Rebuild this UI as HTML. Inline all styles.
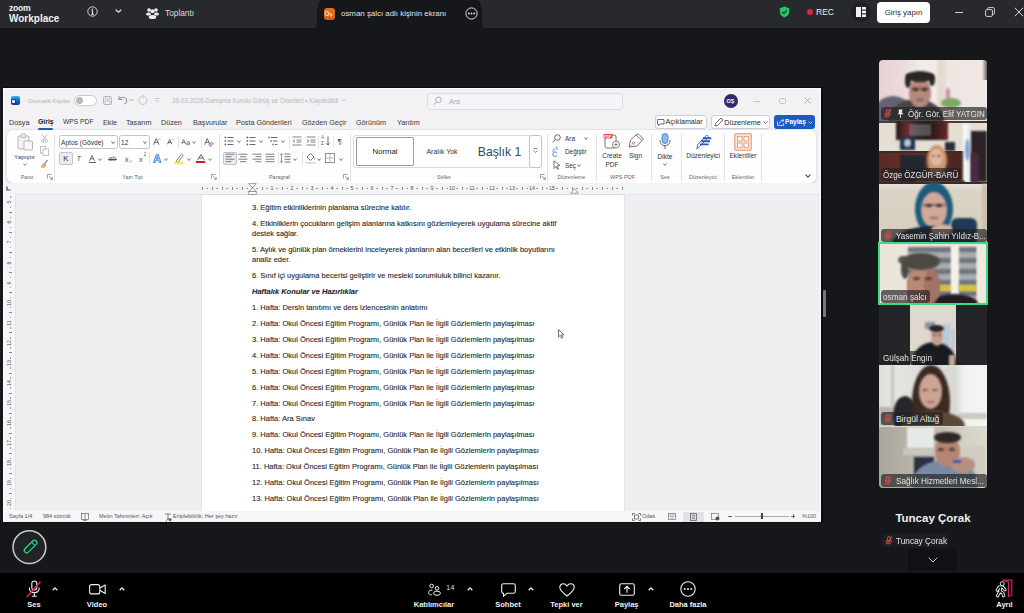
<!DOCTYPE html>
<html><head><meta charset="utf-8">
<style>
*{box-sizing:border-box;margin:0;padding:0}
html,body{width:1024px;height:613px;overflow:hidden}
body{position:relative;background:#15171a;font-family:"Liberation Sans",sans-serif;color:#fff}
.a{position:absolute}
.t{position:absolute;white-space:nowrap;line-height:1}
svg{position:absolute;overflow:visible}
/* word */
#w{left:2.5px;top:87.5px;width:818px;height:434px;background:#f2f1f4;border:1px solid #fbfbfc;box-shadow:1px 0 0 1px #0a0b0d;overflow:hidden;color:#242424}
.mnu{top:118.5px;font-size:7.2px;color:#3a3a3a}
.rl{position:absolute;top:85px;font-size:5.5px;color:#555;white-space:nowrap;line-height:1}
.sep{position:absolute;width:1px;background:#e3e2e6}
.dl{position:absolute;left:0;font-size:7.3px;color:#2a2a2a;white-space:nowrap;line-height:1}
.th{position:absolute;left:879px;width:108px;height:61px;overflow:hidden}
.lb{position:absolute;left:2px;height:13px;background:rgba(30,30,30,.72);border-radius:3px;font-size:8.5px;color:#e8e8e8;white-space:nowrap;line-height:13px;padding:0 2px}
.tb{position:absolute;top:598px;font-size:8.5px;color:#fff;white-space:nowrap;line-height:1;font-weight:bold;transform:translateX(-50%)}
</style></head>
<body>
<!-- top bar -->
<div class="a" style="left:314px;top:0;width:170px;height:8px;background:#28292c"></div>
<div class="a" style="left:0;top:0;width:317px;height:28px;background:#28292c;border-radius:0 0 4px 0"></div>
<div class="a" style="left:318px;top:0;width:163px;height:28px;background:#15171a;border-radius:5px 5px 0 0"></div>
<div class="a" style="left:482px;top:0;width:542px;height:28px;background:#28292c;border-radius:0 0 0 4px"></div>

<!-- word window -->
<div id="w" class="a"></div>

<!-- ===== WORD TITLE BAR ===== -->
<div class="a" style="left:11px;top:96px;width:8.5px;height:8.5px;background:linear-gradient(180deg,#35b8f0 0%,#1a6ad0 50%,#1a2f9a 100%);border-radius:2px"></div>
<div class="a" style="left:11.2px;top:99.3px;width:4.6px;height:4.4px;background:#1a3aa0;border-radius:1.5px"></div>
<div class="a" style="left:12.3px;top:100.3px;width:2.6px;height:2.4px;background:#fff;border-radius:50%"></div>
<div class="t" style="left:28px;top:98.5px;font-size:5.7px;color:#b3b2b6">Otomatik Kaydet</div>
<div class="a" style="left:74px;top:95px;width:23px;height:11px;border:1px solid #c9c8cc;border-radius:6px;background:#fff"></div>
<div class="a" style="left:76px;top:97px;width:7px;height:7px;border-radius:50%;background:#b9b8bc"></div>
<svg style="left:103px;top:96px" width="9" height="9" viewBox="0 0 9 9"><rect x="0.5" y="0.5" width="8" height="8" rx="1" fill="none" stroke="#b8b7bb"/><rect x="2.5" y="0.5" width="4" height="2.5" fill="none" stroke="#b8b7bb" stroke-width=".8"/><rect x="2" y="5" width="5" height="3.5" fill="none" stroke="#b8b7bb" stroke-width=".8"/></svg>
<svg style="left:117px;top:95px" width="12" height="10" viewBox="0 0 12 10"><path d="M2 1 L2 4.5 L5.5 4.5" fill="none" stroke="#9b9a9e" stroke-width="1.1"/><path d="M2.3 4.3 C4 1.5 8.5 1.5 9.5 4.5 C10 6.5 9 8.5 7 9" fill="none" stroke="#9b9a9e" stroke-width="1.1"/></svg>
<svg style="left:129px;top:98px" width="5" height="4" viewBox="0 0 5 4"><path d="M0.5 1 L2.5 3 L4.5 1" fill="none" stroke="#9b9a9e" stroke-width=".8"/></svg>
<svg style="left:137px;top:95px" width="11" height="11" viewBox="0 0 11 11"><path d="M8.5 2.5 A4 4 0 1 1 5.5 1.5" fill="none" stroke="#c2c1c5" stroke-width="1"/><path d="M5 0 L7.5 1.6 L5 3.2" fill="none" stroke="#c2c1c5" stroke-width=".9"/></svg>
<svg style="left:154px;top:98px" width="6" height="5" viewBox="0 0 6 5"><path d="M0.5 0.5 H5.5 M1 2 L3 4 L5 2" fill="none" stroke="#b8b7bb" stroke-width=".8"/></svg>
<div class="t" style="left:172px;top:98.3px;font-size:6.3px;color:#b8b7bb">26.03.2026-Danışma Kurulu Görüş ve Önerileri • Kaydedildi</div>
<svg style="left:341px;top:98px" width="6" height="4" viewBox="0 0 6 4"><path d="M0.5 0.8 L3 3.2 L5.5 0.8" fill="none" stroke="#b8b7bb" stroke-width=".8"/></svg>
<div class="a" style="left:427px;top:93px;width:196px;height:17px;border:1px solid #dedde2;border-radius:3px;background:#f5f4f7"></div>
<svg style="left:433px;top:96px" width="9" height="10" viewBox="0 0 9 10"><circle cx="5.5" cy="3.8" r="2.8" fill="none" stroke="#a5a4a8" stroke-width=".9"/><path d="M3.6 5.8 L1 8.8" stroke="#a5a4a8" stroke-width="1"/></svg>
<div class="t" style="left:449px;top:98px;font-size:7px;color:#a9a8ac">Ara</div>
<div class="a" style="left:724px;top:94px;width:14px;height:14px;border-radius:50%;background:#2f2a6b"></div>
<div class="t" style="left:726.5px;top:98.5px;font-size:5.5px;color:#fff;font-weight:bold">OŞ</div>
<div class="a" style="left:752.5px;top:100.5px;width:7px;height:.8px;background:#c4c3c7"></div>
<div class="a" style="left:779px;top:97.5px;width:6.5px;height:6.5px;border:.8px solid #c4c3c7;border-radius:1.5px"></div>
<svg style="left:804px;top:97px" width="7" height="7" viewBox="0 0 7 7"><path d="M0.5 0.5 L6.5 6.5 M6.5 0.5 L0.5 6.5" stroke="#a9a8ac" stroke-width=".9"/></svg>

<!-- ===== MENU ===== -->
<div class="t mnu" style="left:9px">Dosya</div>
<div class="t mnu" style="left:38px;color:#1f1f1f;font-weight:bold;font-size:6.9px;top:118.8px">Giriş</div>
<div class="a" style="left:38px;top:128px;width:15px;height:2px;background:#2f5aa8;border-radius:1px"></div>
<div class="t mnu" style="left:63px;font-size:6.7px;top:119.3px">WPS PDF</div>
<div class="t mnu" style="left:103px">Ekle</div>
<div class="t mnu" style="left:126px">Tasarım</div>
<div class="t mnu" style="left:161px">Düzen</div>
<div class="t mnu" style="left:193px">Başvurular</div>
<div class="t mnu" style="left:236px">Posta Gönderileri</div>
<div class="t mnu" style="left:302px">Gözden Geçir</div>
<div class="t mnu" style="left:356px">Görünüm</div>
<div class="t mnu" style="left:397px">Yardım</div>

<div class="a" style="left:655px;top:115px;width:52px;height:14px;border:1px solid #d0cfd4;border-radius:3px;background:#fff"></div>
<svg style="left:657px;top:118.5px" width="7.5" height="7.5" viewBox="0 0 7.5 7.5"><path d="M0.5 0.5 H7 V5 H2.8 L1.3 6.8 V5 H0.5 Z" fill="none" stroke="#444" stroke-width=".75" stroke-linejoin="round"/></svg>
<div class="t" style="left:665.6px;top:119px;font-size:7.1px;color:#2a2a2a">Açıklamalar</div>
<div class="a" style="left:711px;top:115px;width:59px;height:14px;border:1px solid #d0cfd4;border-radius:3px;background:#fff"></div>
<svg style="left:714px;top:117px" width="10" height="10" viewBox="0 0 10 10"><path d="M1 9 L1.5 6.5 L7 1 L9 3 L3.5 8.5 Z" fill="none" stroke="#444" stroke-width=".8"/></svg>
<div class="t" style="left:724.3px;top:119px;font-size:7.2px;color:#2a2a2a">Düzenleme</div>
<svg style="left:763px;top:121px" width="5" height="3" viewBox="0 0 5 3"><path d="M0.5 0.5 L2.5 2.5 L4.5 0.5" fill="none" stroke="#444" stroke-width=".7"/></svg>
<div class="a" style="left:774px;top:115px;width:41px;height:14px;border-radius:3px;background:#1b5ac0"></div>
<svg style="left:776.5px;top:118px" width="8" height="8" viewBox="0 0 8 8"><path d="M0.6 3.5 V7.4 H6.6 V5.2" fill="none" stroke="#fff" stroke-width=".75"/><path d="M2.4 5.4 C2.8 3.3 4 2.4 6.6 2.4 M5.3 1 L6.9 2.4 L5.3 3.8" fill="none" stroke="#fff" stroke-width=".75"/></svg>
<div class="t" style="left:785px;top:119px;font-size:6.6px;color:#fff;font-weight:bold">Paylaş</div>
<svg style="left:808px;top:121px" width="5" height="3" viewBox="0 0 5 3"><path d="M0.5 0.5 L2.5 2.5 L4.5 0.5" fill="none" stroke="#fff" stroke-width=".7"/></svg>


<!-- ===== RIBBON ===== -->
<div class="a" style="left:7px;top:130px;width:809px;height:52.5px;background:#fefefe;border-radius:6px;box-shadow:0 0.8px 2px rgba(0,0,0,.2)"></div>
<svg style="left:17px;top:133px" width="17" height="18" viewBox="0 0 17 18"><rect x="1" y="3" width="11" height="13" rx="1" fill="#f2f2f2" stroke="#b5b5b5" stroke-width="1"/><rect x="4" y="1" width="5" height="3.5" rx="1" fill="#e8e8e8" stroke="#b5b5b5" stroke-width=".9"/><rect x="7" y="8" width="8.5" height="9" rx="1" fill="#f7f7f7" stroke="#b5b5b5" stroke-width="1"/></svg>
<div class="t" style="left:24.5px;top:154.21px;font-size:6.20px;color:#444;transform:translateX(-50%);">Yapıştır</div>
<svg style="left:22.5px;top:162.5px" width="4" height="3" viewBox="0 0 4 3"><path d="M0.5 0.5 L2.0 2.5 L3.5 0.5" fill="none" stroke="#666" stroke-width="0.8"/></svg>
<svg style="left:41px;top:134px" width="7" height="9" viewBox="0 0 7 9"><path d="M1 0.5 L5 6 M6 0.5 L2 6" stroke="#b0b0b0" stroke-width=".9"/><circle cx="1.8" cy="7.2" r="1.3" fill="none" stroke="#b0b0b0" stroke-width=".8"/><circle cx="5.2" cy="7.2" r="1.3" fill="none" stroke="#b0b0b0" stroke-width=".8"/></svg>
<svg style="left:40px;top:146px" width="9" height="10" viewBox="0 0 9 10"><rect x="0.5" y="0.5" width="5" height="6.5" fill="none" stroke="#b0b0b0" stroke-width=".8"/><rect x="3" y="3" width="5.5" height="6.5" fill="#fff" stroke="#b0b0b0" stroke-width=".8"/></svg>
<svg style="left:40px;top:159px" width="9" height="9" viewBox="0 0 9 9"><path d="M1 8 L3.5 4.5 L6 6 L4 8.5 Z" fill="#f0b46a" stroke="#d98a3a" stroke-width=".6"/><path d="M4.5 5 L7.5 1" stroke="#777" stroke-width="1.2"/></svg>
<div class="t" style="left:27.0px;top:174.62px;font-size:5.30px;color:#666;transform:translateX(-50%);">Pano</div>
<svg style="left:47.0px;top:174.0px" width="6" height="6" viewBox="0 0 6 6"><path d="M0.5 4.5 V0.5 H4.5" fill="none" stroke="#777" stroke-width=".7"/><path d="M2 2 L5.3 5.3 M5.3 3 V5.3 H3" fill="none" stroke="#777" stroke-width=".7"/></svg>
<div class="a" style="left:54px;top:134px;width:1px;height:47px;background:#e4e3e7"></div>
<div class="a" style="left:59px;top:135px;width:59px;height:14px;border:1px solid #c4c3c8;border-radius:2.5px;background:#fff"></div>
<div class="t" style="left:61.0px;top:140.03px;font-size:6.60px;color:#333;">Aptos (Gövde)</div>
<svg style="left:111.0px;top:140.5px" width="4" height="3" viewBox="0 0 4 3"><path d="M0.5 0.5 L2.0 2.5 L3.5 0.5" fill="none" stroke="#444" stroke-width="0.8"/></svg>
<div class="a" style="left:119px;top:135px;width:31px;height:14px;border:1px solid #c4c3c8;border-radius:2.5px;background:#fff"></div>
<div class="t" style="left:121.0px;top:140.03px;font-size:6.60px;color:#333;">12</div>
<svg style="left:143.0px;top:140.5px" width="4" height="3" viewBox="0 0 4 3"><path d="M0.5 0.5 L2.0 2.5 L3.5 0.5" fill="none" stroke="#444" stroke-width="0.8"/></svg>
<svg style="left:152.7px;top:137.8px" width="6.5" height="7.0" viewBox="0 0 6.5 7.0"><path d="M0.5 6.7 L3.25 0.5 L6.0 6.7 M1.43 4.34 H5.07" fill="none" stroke="#505050" stroke-width="0.85"/></svg>
<svg style="left:158.3px;top:137.5px" width="3" height="3" viewBox="0 0 3 3"><path d="M0.3 2.2 L1.5 0.8 L2.7 2.2" fill="none" stroke="#6a8ab0" stroke-width=".6"/></svg>
<svg style="left:166.9px;top:139.2px" width="5.3" height="5.6" viewBox="0 0 5.3 5.6"><path d="M0.5 5.3 L2.65 0.5 L4.8 5.3 M1.17 3.47 H4.13" fill="none" stroke="#505050" stroke-width="0.85"/></svg>
<svg style="left:171.5px;top:137.5px" width="3" height="3" viewBox="0 0 3 3"><path d="M0.3 0.8 L1.5 2.2 L2.7 0.8" fill="none" stroke="#6a8ab0" stroke-width=".6"/></svg>
<div class="a" style="left:178px;top:136px;width:1px;height:12px;background:#e4e3e7"></div>
<svg style="left:181.0px;top:139.2px" width="5.2" height="5.5" viewBox="0 0 5.2 5.5"><path d="M0.5 5.2 L2.60 0.5 L4.7 5.2 M1.14 3.41 H4.06" fill="none" stroke="#606060" stroke-width="0.8"/></svg>
<svg style="left:185.8px;top:140.8px" width="4.5" height="4.2" viewBox="0 0 4.5 4.2"><path d="M0.5 0.8 C1.5 0.2 3.6 0.3 3.6 1.6 V4 M3.6 2.2 C1.5 1.8 0.4 2.3 0.4 3 C0.4 3.9 2.5 4.1 3.6 3" fill="none" stroke="#606060" stroke-width=".75"/></svg>
<svg style="left:192.3px;top:140.5px" width="4" height="3" viewBox="0 0 4 3"><path d="M0.5 0.5 L2.0 2.5 L3.5 0.5" fill="none" stroke="#555" stroke-width="0.8"/></svg>
<div class="a" style="left:201px;top:136px;width:1px;height:12px;background:#e4e3e7"></div>
<svg style="left:204.0px;top:137.8px" width="6.5" height="7.0" viewBox="0 0 6.5 7.0"><path d="M0.5 6.7 L3.25 0.5 L6.0 6.7 M1.43 4.34 H5.07" fill="none" stroke="#505050" stroke-width="0.85"/></svg>
<svg style="left:207.5px;top:140.5px" width="6" height="6" viewBox="0 0 6 6"><path d="M0.8 4.2 L3.6 1 L5.4 2.5 L2.6 5.5 Z" fill="#e6b8f0" stroke="#b050c0" stroke-width=".7"/></svg>
<div class="a" style="left:59px;top:152px;width:14px;height:13px;border:1px solid #c4c3c8;border-radius:2px;background:#ecebef"></div>
<div class="t" style="left:63.2px;top:155.29px;font-size:7.80px;color:#333;">K</div>
<div class="t" style="left:76.5px;top:155.43px;font-size:7.50px;color:#555;font-style:italic">T</div>
<svg style="left:89.3px;top:154.8px" width="6.0" height="6.2" viewBox="0 0 6.0 6.2"><path d="M0.5 5.9 L3.00 0.5 L5.5 5.9 M1.32 3.84 H4.68" fill="none" stroke="#505050" stroke-width="0.8"/></svg>
<div class="a" style="left:89px;top:162.3px;width:6.6px;height:0.9px;background:#606060"></div>
<svg style="left:97.5px;top:157.5px" width="4" height="3" viewBox="0 0 4 3"><path d="M0.5 0.5 L2.0 2.5 L3.5 0.5" fill="none" stroke="#555" stroke-width="0.8"/></svg>
<div class="t" style="left:108.5px;top:155.94px;font-size:6.80px;color:#666;">ab</div>
<div class="a" style="left:107.5px;top:158.5px;width:9px;height:0.8px;background:#555"></div>
<div class="t" style="left:125.0px;top:155.85px;font-size:7.00px;color:#444;">x</div>
<div class="t" style="left:129.5px;top:159.70px;font-size:4.00px;color:#3a7ad0;">2</div>
<div class="t" style="left:139.0px;top:155.85px;font-size:7.00px;color:#444;">x</div>
<div class="t" style="left:143.8px;top:153.47px;font-size:4.50px;color:#555;">2</div>
<div class="a" style="left:149px;top:152px;width:1px;height:13px;background:#e4e3e7"></div>
<svg style="left:152.5px;top:154px" width="8.5" height="9" viewBox="0 0 8.5 9"><path d="M0.5 8.5 L3.2 0.5 H5.3 L8 8.5 H6.3 L5.6 6.3 H2.9 L2.2 8.5 Z M3.4 4.8 H5.1 L4.25 2.3 Z" fill="#bcd8f6" stroke="#2e7bd6" stroke-width=".8" stroke-linejoin="round"/></svg>
<svg style="left:163.5px;top:157.5px" width="4" height="3" viewBox="0 0 4 3"><path d="M0.5 0.5 L2.0 2.5 L3.5 0.5" fill="none" stroke="#555" stroke-width="0.8"/></svg>
<svg style="left:173.5px;top:153.5px" width="10" height="11" viewBox="0 0 10 11"><path d="M2.5 6.5 L6.8 1 C7.3 0.4 8.1 0.4 8.6 0.9 C9.1 1.4 9.1 2.1 8.6 2.6 L4.5 7.5 L2.2 7.8 Z" fill="#fff" stroke="#555" stroke-width=".75"/><rect x="0.5" y="7.6" width="9" height="2.6" fill="#f2ea40"/></svg>
<svg style="left:186.6px;top:157.5px" width="4" height="3" viewBox="0 0 4 3"><path d="M0.5 0.5 L2.0 2.5 L3.5 0.5" fill="none" stroke="#555" stroke-width="0.8"/></svg>
<svg style="left:196.5px;top:154.4px" width="8.0" height="6.5" viewBox="0 0 8.0 6.5"><path d="M0.5 6.2 L4.00 0.5 L7.5 6.2 M1.76 4.03 H6.24" fill="none" stroke="#505050" stroke-width="0.85"/></svg>
<div class="a" style="left:196px;top:160.7px;width:9px;height:2.4px;background:#cc2020"></div>
<svg style="left:208.3px;top:157.5px" width="4" height="3" viewBox="0 0 4 3"><path d="M0.5 0.5 L2.0 2.5 L3.5 0.5" fill="none" stroke="#555" stroke-width="0.8"/></svg>
<div class="t" style="left:132.5px;top:174.53px;font-size:5.50px;color:#666;transform:translateX(-50%);">Yazı Tipi</div>
<svg style="left:211.0px;top:174.0px" width="6" height="6" viewBox="0 0 6 6"><path d="M0.5 4.5 V0.5 H4.5" fill="none" stroke="#777" stroke-width=".7"/><path d="M2 2 L5.3 5.3 M5.3 3 V5.3 H3" fill="none" stroke="#777" stroke-width=".7"/></svg>
<div class="a" style="left:219px;top:134px;width:1px;height:47px;background:#e4e3e7"></div>
<svg style="left:224px;top:136px" width="10" height="10" viewBox="0 0 10 10"><rect x="0.5" y="0.7" width="1.6" height="1.6" fill="#2e7bd6"/><path d="M3.5 1.5 H9.5" stroke="#555" stroke-width=".9"/><rect x="0.5" y="4.2" width="1.6" height="1.6" fill="#2e7bd6"/><path d="M3.5 5.0 H9.5" stroke="#555" stroke-width=".9"/><rect x="0.5" y="7.7" width="1.6" height="1.6" fill="#2e7bd6"/><path d="M3.5 8.5 H9.5" stroke="#555" stroke-width=".9"/></svg>
<svg style="left:237.0px;top:140.0px" width="4" height="3" viewBox="0 0 4 3"><path d="M0.5 0.5 L2.0 2.5 L3.5 0.5" fill="none" stroke="#555" stroke-width="0.8"/></svg>
<svg style="left:246px;top:136px" width="10" height="10" viewBox="0 0 10 10"><rect x="0.5" y="0.7" width="1.6" height="1.6" fill="#666"/><path d="M3.5 1.5 H9.5" stroke="#555" stroke-width=".9"/><rect x="0.5" y="4.2" width="1.6" height="1.6" fill="#666"/><path d="M3.5 5.0 H9.5" stroke="#555" stroke-width=".9"/><rect x="0.5" y="7.7" width="1.6" height="1.6" fill="#666"/><path d="M3.5 8.5 H9.5" stroke="#555" stroke-width=".9"/></svg>
<svg style="left:259.0px;top:140.0px" width="4" height="3" viewBox="0 0 4 3"><path d="M0.5 0.5 L2.0 2.5 L3.5 0.5" fill="none" stroke="#555" stroke-width="0.8"/></svg>
<svg style="left:268px;top:136px" width="10" height="10" viewBox="0 0 10 10"><rect x="0.3" y="0.8" width="1.5" height="1.5" fill="#2e7bd6"/><path d="M3 1.5 H9.5" stroke="#555" stroke-width=".9"/><rect x="2.3" y="4.3" width="1.5" height="1.5" fill="#2e7bd6"/><path d="M5 5 H9.5" stroke="#555" stroke-width=".9"/><rect x="4.3" y="7.8" width="1.5" height="1.5" fill="#2e7bd6"/><path d="M7 8.5 H9.5" stroke="#555" stroke-width=".9"/></svg>
<svg style="left:281.0px;top:140.0px" width="4" height="3" viewBox="0 0 4 3"><path d="M0.5 0.5 L2.0 2.5 L3.5 0.5" fill="none" stroke="#555" stroke-width="0.8"/></svg>
<div class="a" style="left:289px;top:136px;width:1px;height:12px;background:#e4e3e7"></div>
<svg style="left:292px;top:136px" width="10" height="10" viewBox="0 0 10 10"><path d="M0.5 1 H9.5 M4.5 4 H9.5 M4.5 6 H9.5 M0.5 9 H9.5" stroke="#666" stroke-width=".8"/><path d="M3 3.5 L1 5 L3 6.5" fill="none" stroke="#2e7bd6" stroke-width=".8"/></svg>
<svg style="left:306px;top:136px" width="10" height="10" viewBox="0 0 10 10"><path d="M0.5 1 H9.5 M4.5 4 H9.5 M4.5 6 H9.5 M0.5 9 H9.5" stroke="#666" stroke-width=".8"/><path d="M1 3.5 L3 5 L1 6.5" fill="none" stroke="#2e7bd6" stroke-width=".8"/></svg>
<div class="a" style="left:318px;top:136px;width:1px;height:12px;background:#e4e3e7"></div>
<div class="t" style="left:321.0px;top:136.47px;font-size:4.50px;color:#2e7bd6;">A</div>
<div class="t" style="left:321.0px;top:141.97px;font-size:4.50px;color:#444;">Z</div>
<svg style="left:326px;top:136px" width="4" height="10" viewBox="0 0 4 10"><path d="M2 0.5 V9 M0.5 7.3 L2 9 L3.5 7.3" fill="none" stroke="#444" stroke-width=".8"/></svg>
<div class="a" style="left:333px;top:136px;width:1px;height:12px;background:#e4e3e7"></div>
<div class="t" style="left:337.5px;top:138.40px;font-size:8.00px;color:#444;">¶</div>
<div class="a" style="left:223px;top:152px;width:14px;height:13px;border:1px solid #c4c3c8;border-radius:2px;background:#ecebef"></div>
<svg style="left:225px;top:153px" width="10" height="10" viewBox="0 0 10 10"><path d="M0.5 1.2 H9.5 M0.5 3.7 H6.5 M0.5 6.2 H9.5 M0.5 8.7 H6.5" stroke="#555" stroke-width=".75"/></svg>
<svg style="left:238px;top:153px" width="10" height="10" viewBox="0 0 10 10"><path d="M0.5 1.2 H9.5 M2.0 3.7 H8.0 M0.5 6.2 H9.5 M2.0 8.7 H8.0" stroke="#555" stroke-width=".75"/></svg>
<svg style="left:252px;top:153px" width="10" height="10" viewBox="0 0 10 10"><path d="M0.5 1.2 H9.5 M3.5 3.7 H9.5 M0.5 6.2 H9.5 M3.5 8.7 H9.5" stroke="#555" stroke-width=".75"/></svg>
<svg style="left:265px;top:153px" width="10" height="10" viewBox="0 0 10 10"><path d="M0.5 1.2 H9.5 M0.5 3.7 H9.5 M0.5 6.2 H9.5 M0.5 8.7 H9.5" stroke="#555" stroke-width=".75"/></svg>
<div class="a" style="left:278px;top:152px;width:1px;height:13px;background:#e4e3e7"></div>
<svg style="left:280px;top:153px" width="11" height="10" viewBox="0 0 11 10"><path d="M1.5 0.5 V9.5 M0.3 1.8 L1.5 0.5 L2.7 1.8 M0.3 8.2 L1.5 9.5 L2.7 8.2" fill="none" stroke="#2e7bd6" stroke-width=".7"/><path d="M4.5 1 H10.5 M4.5 3.7 H10.5 M4.5 6.3 H10.5 M4.5 9 H10.5" stroke="#555" stroke-width=".8"/></svg>
<svg style="left:292.5px;top:157.5px" width="4" height="3" viewBox="0 0 4 3"><path d="M0.5 0.5 L2.0 2.5 L3.5 0.5" fill="none" stroke="#555" stroke-width="0.8"/></svg>
<div class="a" style="left:302px;top:152px;width:1px;height:13px;background:#e4e3e7"></div>
<svg style="left:305px;top:152px" width="11" height="12" viewBox="0 0 11 12"><path d="M2 5 L5.5 1.5 L9 5 L5.5 8.5 Z" fill="none" stroke="#555" stroke-width=".8"/><path d="M9 5.5 C9.5 6.5 10 7 9.5 7.5" fill="none" stroke="#555" stroke-width=".7"/><rect x="0.5" y="10" width="10" height="1.8" fill="#dcdcdc"/></svg>
<svg style="left:317.0px;top:157.5px" width="4" height="3" viewBox="0 0 4 3"><path d="M0.5 0.5 L2.0 2.5 L3.5 0.5" fill="none" stroke="#555" stroke-width="0.8"/></svg>
<svg style="left:325px;top:153px" width="10" height="10" viewBox="0 0 10 10"><rect x="0.5" y="0.5" width="9" height="9" fill="none" stroke="#777" stroke-width=".8"/><path d="M5 0.5 V9.5 M0.5 5 H9.5" stroke="#999" stroke-width=".6"/></svg>
<svg style="left:338.5px;top:157.5px" width="4" height="3" viewBox="0 0 4 3"><path d="M0.5 0.5 L2.0 2.5 L3.5 0.5" fill="none" stroke="#555" stroke-width="0.8"/></svg>
<div class="t" style="left:279.5px;top:174.53px;font-size:5.50px;color:#666;transform:translateX(-50%);">Paragraf</div>
<svg style="left:343.0px;top:174.0px" width="6" height="6" viewBox="0 0 6 6"><path d="M0.5 4.5 V0.5 H4.5" fill="none" stroke="#777" stroke-width=".7"/><path d="M2 2 L5.3 5.3 M5.3 3 V5.3 H3" fill="none" stroke="#777" stroke-width=".7"/></svg>
<div class="a" style="left:350px;top:134px;width:1px;height:47px;background:#e4e3e7"></div>
<div class="a" style="left:353px;top:135px;width:189px;height:33px;border:1px solid #dcdbe0;border-radius:3px;background:#fff"></div>
<div class="a" style="left:356px;top:137px;width:58px;height:29px;border:1px solid #9e9ea2;border-radius:1px;background:#fff"></div>
<div class="t" style="left:385.0px;top:147.99px;font-size:7.80px;color:#222;transform:translateX(-50%);">Normal</div>
<div class="t" style="left:442.0px;top:148.35px;font-size:7.00px;color:#333;transform:translateX(-50%);">Aralık Yok</div>
<div class="t" style="left:499.5px;top:146.01px;font-size:12.20px;color:#2b4b5e;transform:translateX(-50%);">Başlık 1</div>
<div class="a" style="left:529px;top:135px;width:13px;height:33px;border:1px solid #c4c3c8;border-radius:3px;background:#fff"></div>
<svg style="left:533px;top:148px" width="5" height="6" viewBox="0 0 5 6"><path d="M0.5 0.5 H4.5 M0.5 2.5 L2.5 4.5 L4.5 2.5" fill="none" stroke="#555" stroke-width=".7"/></svg>
<div class="t" style="left:444.0px;top:174.53px;font-size:5.50px;color:#666;transform:translateX(-50%);">Stiller</div>
<svg style="left:540.0px;top:174.0px" width="6" height="6" viewBox="0 0 6 6"><path d="M0.5 4.5 V0.5 H4.5" fill="none" stroke="#777" stroke-width=".7"/><path d="M2 2 L5.3 5.3 M5.3 3 V5.3 H3" fill="none" stroke="#777" stroke-width=".7"/></svg>
<div class="a" style="left:547px;top:134px;width:1px;height:47px;background:#e4e3e7"></div>
<svg style="left:552px;top:134px" width="9" height="9" viewBox="0 0 9 9"><circle cx="5.5" cy="3.5" r="2.8" fill="none" stroke="#555" stroke-width=".9"/><path d="M3.5 5.5 L0.8 8.3" stroke="#555" stroke-width="1"/></svg>
<div class="t" style="left:565.0px;top:136.12px;font-size:6.40px;color:#333;">Ara</div>
<svg style="left:584.0px;top:137.0px" width="4" height="3" viewBox="0 0 4 3"><path d="M0.5 0.5 L2.0 2.5 L3.5 0.5" fill="none" stroke="#555" stroke-width="0.8"/></svg>
<svg style="left:552px;top:146px" width="10" height="10" viewBox="0 0 10 10"><text x="3.5" y="4" font-size="4.5" fill="#a050c0" font-family="Liberation Sans">b</text><path d="M5 7 A2.3 2.3 0 1 0 5 9.5" fill="none" stroke="#2e7bd6" stroke-width=".9"/><path d="M1 6 A3 3 0 0 1 3 2.5" fill="none" stroke="#2e7bd6" stroke-width=".7"/></svg>
<div class="t" style="left:565.0px;top:149.12px;font-size:6.40px;color:#333;">Değiştir</div>
<svg style="left:553px;top:160px" width="8" height="10" viewBox="0 0 8 10"><path d="M1 0.8 L7 5.5 L4 6 L5.5 9 L4.5 9.4 L3 6.5 L1 8.5 Z" fill="none" stroke="#555" stroke-width=".8"/></svg>
<div class="t" style="left:565.0px;top:162.62px;font-size:6.40px;color:#333;">Seç</div>
<svg style="left:577.0px;top:163.5px" width="4" height="3" viewBox="0 0 4 3"><path d="M0.5 0.5 L2.0 2.5 L3.5 0.5" fill="none" stroke="#555" stroke-width="0.8"/></svg>
<div class="t" style="left:571.5px;top:174.53px;font-size:5.50px;color:#666;transform:translateX(-50%);">Düzenleme</div>
<div class="a" style="left:596px;top:134px;width:1px;height:47px;background:#e4e3e7"></div>
<svg style="left:603px;top:133px" width="18" height="16" viewBox="0 0 18 16"><rect x="2" y="2" width="11" height="13" rx="2" fill="#fff" stroke="#666" stroke-width=".9"/><rect x="0.5" y="1" width="9" height="4.5" rx="1" fill="#e84545"/><text x="1.2" y="4.6" font-size="3.5" fill="#fff" font-family="Liberation Sans" font-weight="bold">PDF</text><circle cx="13" cy="11.5" r="3.5" fill="#fff" stroke="#666" stroke-width=".8"/><path d="M13 9.8 V13.2 M11.3 11.5 H14.7" stroke="#666" stroke-width=".8"/></svg>
<div class="t" style="left:612.0px;top:152.57px;font-size:6.50px;color:#333;transform:translateX(-50%);">Create</div>
<div class="t" style="left:612.0px;top:161.57px;font-size:6.50px;color:#333;transform:translateX(-50%);">PDF</div>
<svg style="left:627px;top:133px" width="17" height="16" viewBox="0 0 17 16"><path d="M2 14 L3.5 7 L9 2 L15 7.5 L10 13 Z" fill="#fff" stroke="#666" stroke-width=".9"/><path d="M9 2 L11 0.5 L16.5 6 L15 7.5" fill="none" stroke="#666" stroke-width=".9"/><circle cx="6.5" cy="10" r="1.2" fill="none" stroke="#e06060" stroke-width=".7"/><path d="M2 14 L6 10.5" stroke="#e06060" stroke-width=".6"/></svg>
<div class="t" style="left:635.5px;top:152.57px;font-size:6.50px;color:#333;transform:translateX(-50%);">Sign</div>
<div class="t" style="left:622.5px;top:174.53px;font-size:5.50px;color:#666;transform:translateX(-50%);">WPS PDF</div>
<div class="a" style="left:651px;top:134px;width:1px;height:47px;background:#e4e3e7"></div>
<svg style="left:659px;top:133px" width="12" height="17" viewBox="0 0 12 17"><rect x="3" y="0.5" width="6" height="10" rx="3" fill="#8cb8ec" stroke="#3a78c8" stroke-width=".8"/><path d="M1 7 C1 11 3 12.5 6 12.5 C9 12.5 11 11 11 7 M6 12.5 V16" fill="none" stroke="#555" stroke-width=".9"/></svg>
<div class="t" style="left:665.0px;top:154.03px;font-size:6.60px;color:#333;transform:translateX(-50%);">Dikte</div>
<svg style="left:663.0px;top:162.5px" width="4" height="3" viewBox="0 0 4 3"><path d="M0.5 0.5 L2.0 2.5 L3.5 0.5" fill="none" stroke="#555" stroke-width="0.8"/></svg>
<div class="t" style="left:665.0px;top:174.53px;font-size:5.50px;color:#666;transform:translateX(-50%);">Ses</div>
<div class="a" style="left:681px;top:134px;width:1px;height:47px;background:#e4e3e7"></div>
<svg style="left:694.5px;top:133px" width="18" height="18" viewBox="0 0 18 18"><path d="M1.8 15.8 L2.8 11.5 L11.8 2 L13.6 3.8 L4.8 13.4 Z" fill="#fff" stroke="#2a5cb8" stroke-width=".9" stroke-linejoin="round"/><path d="M7.8 5.2 H16.3 M6.3 8.3 H15 M4.9 11.4 H13.6" stroke="#2a5cb8" stroke-width="1.9"/></svg>
<div class="t" style="left:703.0px;top:152.53px;font-size:6.60px;color:#333;transform:translateX(-50%);">Düzenleyici</div>
<div class="t" style="left:703.0px;top:174.53px;font-size:5.50px;color:#666;transform:translateX(-50%);">Düzenleyici</div>
<div class="a" style="left:724px;top:134px;width:1px;height:47px;background:#e4e3e7"></div>
<svg style="left:734px;top:133px" width="18" height="18" viewBox="0 0 18 18"><rect x="0.8" y="0.8" width="16.4" height="16.4" rx=".4" fill="#fbe6dc" stroke="#e0906e" stroke-width="1"/><rect x="3.5" y="3.5" width="4.5" height="4.5" fill="#fff" stroke="#e0906e" stroke-width=".8"/><rect x="10" y="3.5" width="4.5" height="4.5" fill="#fff" stroke="#e0906e" stroke-width=".8"/><rect x="3.5" y="10" width="4.5" height="4.5" fill="#fff" stroke="#e0906e" stroke-width=".8"/><rect x="10" y="10" width="4.5" height="4.5" fill="#fff" stroke="#e0906e" stroke-width=".8"/></svg>
<div class="t" style="left:743.0px;top:152.53px;font-size:6.60px;color:#333;transform:translateX(-50%);">Eklentiler</div>
<div class="t" style="left:743.0px;top:174.53px;font-size:5.50px;color:#666;transform:translateX(-50%);">Eklentiler</div>
<div class="a" style="left:761px;top:134px;width:1px;height:47px;background:#e4e3e7"></div>
<svg style="left:805px;top:173.5px" width="6" height="4" viewBox="0 0 6 4"><path d="M0.6 0.6 L3 3.2 L5.4 0.6" fill="none" stroke="#444" stroke-width="1.1"/></svg>
<!-- ===== DOC AREA ===== -->
<div class="a" style="left:4px;top:183px;width:816px;height:12px;background:#f4f3f6"></div>
<div class="a" style="left:16px;top:194px;width:804px;height:1px;background:#e6e5e9"></div>
<div class="a" style="left:4px;top:195px;width:12px;height:316px;background:#f6f5f8;border-right:1px solid #e3e2e6"></div>
<div class="a" style="left:16px;top:195px;width:804px;height:316px;background:#f0eef1"></div>
<div class="a" style="left:202px;top:195px;width:422px;height:316px;background:#fff;box-shadow:0 0 1.5px rgba(0,0,0,.18)"></div>
<svg style="left:6px;top:186px" width="5" height="5" viewBox="0 0 5 5"><path d="M1 0.5 V4 H4.5" fill="none" stroke="#444" stroke-width="1.2"/></svg>
<div class="a" style="left:201.6px;top:187px;width:0.8px;height:3px;background:#888"></div>
<div class="a" style="left:206.2px;top:188px;width:1.5px;height:0.8px;background:#999"></div>
<div class="a" style="left:211.6px;top:187px;width:0.8px;height:3px;background:#888"></div>
<div class="a" style="left:216.2px;top:188px;width:1.5px;height:0.8px;background:#999"></div>
<div class="a" style="left:221.6px;top:187px;width:0.8px;height:3px;background:#888"></div>
<div class="a" style="left:226.2px;top:188px;width:1.5px;height:0.8px;background:#999"></div>
<div class="a" style="left:231.6px;top:187px;width:0.8px;height:3px;background:#888"></div>
<div class="a" style="left:236.2px;top:188px;width:1.5px;height:0.8px;background:#999"></div>
<div class="a" style="left:241.6px;top:187px;width:0.8px;height:3px;background:#888"></div>
<div class="a" style="left:246.2px;top:188px;width:1.5px;height:0.8px;background:#999"></div>
<div class="a" style="left:251.6px;top:187px;width:0.8px;height:3px;background:#888"></div>
<div class="a" style="left:256.2px;top:188px;width:1.5px;height:0.8px;background:#999"></div>
<div class="a" style="left:261.6px;top:187px;width:0.8px;height:3px;background:#888"></div>
<div class="a" style="left:266.2px;top:188px;width:1.5px;height:0.8px;background:#999"></div>
<div class="t" style="left:272.0px;top:186.12px;font-size:5.30px;color:#555;transform:translateX(-50%);">1</div>
<div class="a" style="left:276.2px;top:188px;width:1.5px;height:0.8px;background:#999"></div>
<div class="a" style="left:281.6px;top:187px;width:0.8px;height:3px;background:#888"></div>
<div class="a" style="left:286.2px;top:188px;width:1.5px;height:0.8px;background:#999"></div>
<div class="t" style="left:292.0px;top:186.12px;font-size:5.30px;color:#555;transform:translateX(-50%);">2</div>
<div class="a" style="left:296.2px;top:188px;width:1.5px;height:0.8px;background:#999"></div>
<div class="a" style="left:301.6px;top:187px;width:0.8px;height:3px;background:#888"></div>
<div class="a" style="left:306.2px;top:188px;width:1.5px;height:0.8px;background:#999"></div>
<div class="t" style="left:312.0px;top:186.12px;font-size:5.30px;color:#555;transform:translateX(-50%);">3</div>
<div class="a" style="left:316.2px;top:188px;width:1.5px;height:0.8px;background:#999"></div>
<div class="a" style="left:321.6px;top:187px;width:0.8px;height:3px;background:#888"></div>
<div class="a" style="left:326.2px;top:188px;width:1.5px;height:0.8px;background:#999"></div>
<div class="t" style="left:332.0px;top:186.12px;font-size:5.30px;color:#555;transform:translateX(-50%);">4</div>
<div class="a" style="left:336.2px;top:188px;width:1.5px;height:0.8px;background:#999"></div>
<div class="a" style="left:341.6px;top:187px;width:0.8px;height:3px;background:#888"></div>
<div class="a" style="left:346.2px;top:188px;width:1.5px;height:0.8px;background:#999"></div>
<div class="t" style="left:352.0px;top:186.12px;font-size:5.30px;color:#555;transform:translateX(-50%);">5</div>
<div class="a" style="left:356.2px;top:188px;width:1.5px;height:0.8px;background:#999"></div>
<div class="a" style="left:361.6px;top:187px;width:0.8px;height:3px;background:#888"></div>
<div class="a" style="left:366.2px;top:188px;width:1.5px;height:0.8px;background:#999"></div>
<div class="t" style="left:372.0px;top:186.12px;font-size:5.30px;color:#555;transform:translateX(-50%);">6</div>
<div class="a" style="left:376.2px;top:188px;width:1.5px;height:0.8px;background:#999"></div>
<div class="a" style="left:381.6px;top:187px;width:0.8px;height:3px;background:#888"></div>
<div class="a" style="left:386.2px;top:188px;width:1.5px;height:0.8px;background:#999"></div>
<div class="t" style="left:392.0px;top:186.12px;font-size:5.30px;color:#555;transform:translateX(-50%);">7</div>
<div class="a" style="left:396.2px;top:188px;width:1.5px;height:0.8px;background:#999"></div>
<div class="a" style="left:401.6px;top:187px;width:0.8px;height:3px;background:#888"></div>
<div class="a" style="left:406.2px;top:188px;width:1.5px;height:0.8px;background:#999"></div>
<div class="t" style="left:412.0px;top:186.12px;font-size:5.30px;color:#555;transform:translateX(-50%);">8</div>
<div class="a" style="left:416.2px;top:188px;width:1.5px;height:0.8px;background:#999"></div>
<div class="a" style="left:421.6px;top:187px;width:0.8px;height:3px;background:#888"></div>
<div class="a" style="left:426.2px;top:188px;width:1.5px;height:0.8px;background:#999"></div>
<div class="t" style="left:432.0px;top:186.12px;font-size:5.30px;color:#555;transform:translateX(-50%);">9</div>
<div class="a" style="left:436.2px;top:188px;width:1.5px;height:0.8px;background:#999"></div>
<div class="a" style="left:441.6px;top:187px;width:0.8px;height:3px;background:#888"></div>
<div class="a" style="left:446.2px;top:188px;width:1.5px;height:0.8px;background:#999"></div>
<div class="t" style="left:452.0px;top:186.12px;font-size:5.30px;color:#555;transform:translateX(-50%);">10</div>
<div class="a" style="left:456.2px;top:188px;width:1.5px;height:0.8px;background:#999"></div>
<div class="a" style="left:461.6px;top:187px;width:0.8px;height:3px;background:#888"></div>
<div class="a" style="left:466.2px;top:188px;width:1.5px;height:0.8px;background:#999"></div>
<div class="t" style="left:472.0px;top:186.12px;font-size:5.30px;color:#555;transform:translateX(-50%);">11</div>
<div class="a" style="left:476.2px;top:188px;width:1.5px;height:0.8px;background:#999"></div>
<div class="a" style="left:481.6px;top:187px;width:0.8px;height:3px;background:#888"></div>
<div class="a" style="left:486.2px;top:188px;width:1.5px;height:0.8px;background:#999"></div>
<div class="t" style="left:492.0px;top:186.12px;font-size:5.30px;color:#555;transform:translateX(-50%);">12</div>
<div class="a" style="left:496.2px;top:188px;width:1.5px;height:0.8px;background:#999"></div>
<div class="a" style="left:501.6px;top:187px;width:0.8px;height:3px;background:#888"></div>
<div class="a" style="left:506.2px;top:188px;width:1.5px;height:0.8px;background:#999"></div>
<div class="t" style="left:512.0px;top:186.12px;font-size:5.30px;color:#555;transform:translateX(-50%);">13</div>
<div class="a" style="left:516.2px;top:188px;width:1.5px;height:0.8px;background:#999"></div>
<div class="a" style="left:521.6px;top:187px;width:0.8px;height:3px;background:#888"></div>
<div class="a" style="left:526.2px;top:188px;width:1.5px;height:0.8px;background:#999"></div>
<div class="t" style="left:532.0px;top:186.12px;font-size:5.30px;color:#555;transform:translateX(-50%);">14</div>
<div class="a" style="left:536.2px;top:188px;width:1.5px;height:0.8px;background:#999"></div>
<div class="a" style="left:541.6px;top:187px;width:0.8px;height:3px;background:#888"></div>
<div class="a" style="left:546.2px;top:188px;width:1.5px;height:0.8px;background:#999"></div>
<div class="t" style="left:552.0px;top:186.12px;font-size:5.30px;color:#555;transform:translateX(-50%);">15</div>
<div class="a" style="left:556.2px;top:188px;width:1.5px;height:0.8px;background:#999"></div>
<div class="a" style="left:561.6px;top:187px;width:0.8px;height:3px;background:#888"></div>
<div class="a" style="left:566.2px;top:188px;width:1.5px;height:0.8px;background:#999"></div>
<div class="a" style="left:571.6px;top:187px;width:0.8px;height:3px;background:#888"></div>
<div class="a" style="left:576.2px;top:188px;width:1.5px;height:0.8px;background:#999"></div>
<div class="a" style="left:581.6px;top:187px;width:0.8px;height:3px;background:#888"></div>
<div class="a" style="left:586.2px;top:188px;width:1.5px;height:0.8px;background:#999"></div>
<div class="a" style="left:591.6px;top:187px;width:0.8px;height:3px;background:#888"></div>
<div class="a" style="left:596.2px;top:188px;width:1.5px;height:0.8px;background:#999"></div>
<div class="a" style="left:601.6px;top:187px;width:0.8px;height:3px;background:#888"></div>
<div class="a" style="left:606.2px;top:188px;width:1.5px;height:0.8px;background:#999"></div>
<div class="a" style="left:611.6px;top:187px;width:0.8px;height:3px;background:#888"></div>
<div class="a" style="left:616.2px;top:188px;width:1.5px;height:0.8px;background:#999"></div>
<div class="a" style="left:621.6px;top:187px;width:0.8px;height:3px;background:#888"></div>
<svg style="left:248px;top:183px" width="9" height="12" viewBox="0 0 9 12"><path d="M0.8 0.6 H8.2 L4.5 5 Z M4.5 5 L0.8 8.5 H8.2 Z" fill="#fff" stroke="#777" stroke-width=".7"/><rect x="0.8" y="8.5" width="7.4" height="3" fill="#fff" stroke="#777" stroke-width=".7"/></svg>
<svg style="left:570px;top:188px" width="9" height="6" viewBox="0 0 9 6"><path d="M4.5 0.6 L8.2 5.2 H0.8 Z" fill="#fff" stroke="#777" stroke-width=".7"/></svg>
<div class="a" style="left:9.5px;top:196.4px;width:0.8px;height:1.5px;background:#999"></div>
<div class="t" style="left:9.5px;top:202.2px;font-size:5.3px;color:#555;transform:translate(-50%,-50%) rotate(-90deg)">5</div>
<div class="a" style="left:9.5px;top:206.5px;width:0.8px;height:1.5px;background:#999"></div>
<div class="a" style="left:8.5px;top:211.9px;width:3px;height:0.8px;background:#888"></div>
<div class="a" style="left:9.5px;top:216.5px;width:0.8px;height:1.5px;background:#999"></div>
<div class="t" style="left:9.5px;top:222.3px;font-size:5.3px;color:#555;transform:translate(-50%,-50%) rotate(-90deg)">6</div>
<div class="a" style="left:9.5px;top:226.6px;width:0.8px;height:1.5px;background:#999"></div>
<div class="a" style="left:8.5px;top:231.9px;width:3px;height:0.8px;background:#888"></div>
<div class="a" style="left:9.5px;top:236.6px;width:0.8px;height:1.5px;background:#999"></div>
<div class="t" style="left:9.5px;top:242.4px;font-size:5.3px;color:#555;transform:translate(-50%,-50%) rotate(-90deg)">7</div>
<div class="a" style="left:9.5px;top:246.6px;width:0.8px;height:1.5px;background:#999"></div>
<div class="a" style="left:8.5px;top:252.0px;width:3px;height:0.8px;background:#888"></div>
<div class="a" style="left:9.5px;top:256.7px;width:0.8px;height:1.5px;background:#999"></div>
<div class="t" style="left:9.5px;top:262.5px;font-size:5.3px;color:#555;transform:translate(-50%,-50%) rotate(-90deg)">8</div>
<div class="a" style="left:9.5px;top:266.7px;width:0.8px;height:1.5px;background:#999"></div>
<div class="a" style="left:8.5px;top:272.1px;width:3px;height:0.8px;background:#888"></div>
<div class="a" style="left:9.5px;top:276.8px;width:0.8px;height:1.5px;background:#999"></div>
<div class="t" style="left:9.5px;top:282.5px;font-size:5.3px;color:#555;transform:translate(-50%,-50%) rotate(-90deg)">9</div>
<div class="a" style="left:9.5px;top:286.8px;width:0.8px;height:1.5px;background:#999"></div>
<div class="a" style="left:8.5px;top:292.2px;width:3px;height:0.8px;background:#888"></div>
<div class="a" style="left:9.5px;top:296.8px;width:0.8px;height:1.5px;background:#999"></div>
<div class="t" style="left:9.5px;top:302.6px;font-size:5.3px;color:#555;transform:translate(-50%,-50%) rotate(-90deg)">10</div>
<div class="a" style="left:9.5px;top:306.9px;width:0.8px;height:1.5px;background:#999"></div>
<div class="a" style="left:8.5px;top:312.3px;width:3px;height:0.8px;background:#888"></div>
<div class="a" style="left:9.5px;top:316.9px;width:0.8px;height:1.5px;background:#999"></div>
<div class="t" style="left:9.5px;top:322.7px;font-size:5.3px;color:#555;transform:translate(-50%,-50%) rotate(-90deg)">11</div>
<div class="a" style="left:9.5px;top:327.0px;width:0.8px;height:1.5px;background:#999"></div>
<div class="a" style="left:8.5px;top:332.3px;width:3px;height:0.8px;background:#888"></div>
<div class="a" style="left:9.5px;top:337.0px;width:0.8px;height:1.5px;background:#999"></div>
<div class="t" style="left:9.5px;top:342.8px;font-size:5.3px;color:#555;transform:translate(-50%,-50%) rotate(-90deg)">12</div>
<div class="a" style="left:9.5px;top:347.0px;width:0.8px;height:1.5px;background:#999"></div>
<div class="a" style="left:8.5px;top:352.4px;width:3px;height:0.8px;background:#888"></div>
<div class="a" style="left:9.5px;top:357.1px;width:0.8px;height:1.5px;background:#999"></div>
<div class="t" style="left:9.5px;top:362.9px;font-size:5.3px;color:#555;transform:translate(-50%,-50%) rotate(-90deg)">13</div>
<div class="a" style="left:9.5px;top:367.1px;width:0.8px;height:1.5px;background:#999"></div>
<div class="a" style="left:8.5px;top:372.5px;width:3px;height:0.8px;background:#888"></div>
<div class="a" style="left:9.5px;top:377.2px;width:0.8px;height:1.5px;background:#999"></div>
<div class="t" style="left:9.5px;top:382.9px;font-size:5.3px;color:#555;transform:translate(-50%,-50%) rotate(-90deg)">14</div>
<div class="a" style="left:9.5px;top:387.2px;width:0.8px;height:1.5px;background:#999"></div>
<div class="a" style="left:8.5px;top:392.6px;width:3px;height:0.8px;background:#888"></div>
<div class="a" style="left:9.5px;top:397.2px;width:0.8px;height:1.5px;background:#999"></div>
<div class="t" style="left:9.5px;top:403.0px;font-size:5.3px;color:#555;transform:translate(-50%,-50%) rotate(-90deg)">15</div>
<div class="a" style="left:9.5px;top:407.3px;width:0.8px;height:1.5px;background:#999"></div>
<div class="a" style="left:8.5px;top:412.7px;width:3px;height:0.8px;background:#888"></div>
<div class="a" style="left:9.5px;top:417.3px;width:0.8px;height:1.5px;background:#999"></div>
<div class="t" style="left:9.5px;top:423.1px;font-size:5.3px;color:#555;transform:translate(-50%,-50%) rotate(-90deg)">16</div>
<div class="a" style="left:9.5px;top:427.4px;width:0.8px;height:1.5px;background:#999"></div>
<div class="a" style="left:8.5px;top:432.7px;width:3px;height:0.8px;background:#888"></div>
<div class="a" style="left:9.5px;top:437.4px;width:0.8px;height:1.5px;background:#999"></div>
<div class="t" style="left:9.5px;top:443.2px;font-size:5.3px;color:#555;transform:translate(-50%,-50%) rotate(-90deg)">17</div>
<div class="a" style="left:9.5px;top:447.4px;width:0.8px;height:1.5px;background:#999"></div>
<div class="a" style="left:8.5px;top:452.8px;width:3px;height:0.8px;background:#888"></div>
<div class="a" style="left:9.5px;top:457.5px;width:0.8px;height:1.5px;background:#999"></div>
<div class="t" style="left:9.5px;top:463.3px;font-size:5.3px;color:#555;transform:translate(-50%,-50%) rotate(-90deg)">18</div>
<div class="a" style="left:9.5px;top:467.5px;width:0.8px;height:1.5px;background:#999"></div>
<div class="a" style="left:8.5px;top:472.9px;width:3px;height:0.8px;background:#888"></div>
<div class="a" style="left:9.5px;top:477.6px;width:0.8px;height:1.5px;background:#999"></div>
<div class="t" style="left:9.5px;top:483.3px;font-size:5.3px;color:#555;transform:translate(-50%,-50%) rotate(-90deg)">19</div>
<div class="a" style="left:9.5px;top:487.6px;width:0.8px;height:1.5px;background:#999"></div>
<div class="a" style="left:8.5px;top:493.0px;width:3px;height:0.8px;background:#888"></div>
<div class="a" style="left:9.5px;top:497.6px;width:0.8px;height:1.5px;background:#999"></div>
<div class="t" style="left:9.5px;top:503.4px;font-size:5.3px;color:#555;transform:translate(-50%,-50%) rotate(-90deg)">20</div>
<div class="a" style="left:9.5px;top:507.7px;width:0.8px;height:1.5px;background:#999"></div>
<div class="t" style="left:252.0px;top:203.93px;font-size:7.50px;color:#262626;-webkit-text-stroke:0.1px #262626;">3. Eğitim etkinliklerinin planlama sürecine katılır.</div>
<div class="t" style="left:252.0px;top:219.62px;font-size:7.50px;color:#262626;-webkit-text-stroke:0.1px #262626;">4. Etkinliklerin çocukların gelişim alanlarına katkısını gözlemleyerek uygulama sürecine aktif</div>
<div class="t" style="left:252.0px;top:230.03px;font-size:7.50px;color:#262626;-webkit-text-stroke:0.1px #262626;">destek sağlar.</div>
<div class="t" style="left:252.0px;top:245.82px;font-size:7.50px;color:#262626;-webkit-text-stroke:0.1px #262626;">5. Aylık ve günlük plan örneklerini inceleyerek planların alan becerileri ve etkinlik boyutlarını</div>
<div class="t" style="left:252.0px;top:256.23px;font-size:7.50px;color:#262626;-webkit-text-stroke:0.1px #262626;">analiz eder.</div>
<div class="t" style="left:252.0px;top:271.82px;font-size:7.50px;color:#262626;-webkit-text-stroke:0.1px #262626;">6. Sınıf içi uygulama becerisi geliştirir ve mesleki sorumluluk bilinci kazanır.</div>
<div class="t" style="left:252.0px;top:288.12px;font-size:7.50px;color:#262626;font-weight:bold;font-style:italic;-webkit-text-stroke:0.1px #262626;">Haftalık Konular ve Hazırlıklar</div>
<div class="t" style="left:252.0px;top:304.12px;font-size:7.50px;color:#262626;-webkit-text-stroke:0.1px #262626;">1. Hafta: Dersin tanıtımı ve ders izlencesinin anlatımı</div>
<div class="t" style="left:252.0px;top:320.02px;font-size:7.50px;color:#262626;-webkit-text-stroke:0.1px #262626;">2. Hafta: Okul Öncesi Eğitim Programı, Günlük Plan ile İlgili Gözlemlerin paylaşılması</div>
<div class="t" style="left:252.0px;top:335.93px;font-size:7.50px;color:#262626;-webkit-text-stroke:0.1px #262626;">3. Hafta: Okul Öncesi Eğitim Programı, Günlük Plan ile İlgili Gözlemlerin paylaşılması</div>
<div class="t" style="left:252.0px;top:351.82px;font-size:7.50px;color:#262626;-webkit-text-stroke:0.1px #262626;">4. Hafta: Okul Öncesi Eğitim Programı, Günlük Plan ile İlgili Gözlemlerin paylaşılması</div>
<div class="t" style="left:252.0px;top:367.73px;font-size:7.50px;color:#262626;-webkit-text-stroke:0.1px #262626;">5. Hafta: Okul Öncesi Eğitim Programı, Günlük Plan ile İlgili Gözlemlerin paylaşılması</div>
<div class="t" style="left:252.0px;top:383.62px;font-size:7.50px;color:#262626;-webkit-text-stroke:0.1px #262626;">6. Hafta: Okul Öncesi Eğitim Programı, Günlük Plan ile İlgili Gözlemlerin paylaşılması</div>
<div class="t" style="left:252.0px;top:399.52px;font-size:7.50px;color:#262626;-webkit-text-stroke:0.1px #262626;">7. Hafta: Okul Öncesi Eğitim Programı, Günlük Plan ile İlgili Gözlemlerin paylaşılması</div>
<div class="t" style="left:252.0px;top:415.43px;font-size:7.50px;color:#262626;-webkit-text-stroke:0.1px #262626;">8. Hafta: Ara Sınav</div>
<div class="t" style="left:252.0px;top:431.32px;font-size:7.50px;color:#262626;-webkit-text-stroke:0.1px #262626;">9. Hafta: Okul Öncesi Eğitim Programı, Günlük Plan ile İlgili Gözlemlerin paylaşılması</div>
<div class="t" style="left:252.0px;top:447.23px;font-size:7.50px;color:#262626;-webkit-text-stroke:0.1px #262626;">10. Hafta: Okul Öncesi Eğitim Programı, Günlük Plan ile İlgili Gözlemlerin paylaşılması</div>
<div class="t" style="left:252.0px;top:463.12px;font-size:7.50px;color:#262626;-webkit-text-stroke:0.1px #262626;">11. Hafta: Okul Öncesi Eğitim Programı, Günlük Plan ile İlgili Gözlemlerin paylaşılması</div>
<div class="t" style="left:252.0px;top:479.02px;font-size:7.50px;color:#262626;-webkit-text-stroke:0.1px #262626;">12. Hafta: Okul Öncesi Eğitim Programı, Günlük Plan ile İlgili Gözlemlerin paylaşılması</div>
<div class="t" style="left:252.0px;top:494.93px;font-size:7.50px;color:#262626;-webkit-text-stroke:0.1px #262626;">13. Hafta: Okul Öncesi Eğitim Programı, Günlük Plan ile İlgili Gözlemlerin paylaşılması</div>
<svg style="left:558px;top:329px" width="7" height="10" viewBox="0 0 7 10"><path d="M0.5 0.5 L0.5 8 L2.3 6.3 L3.6 9.2 L4.8 8.7 L3.6 5.9 L6 5.9 Z" fill="#fff" stroke="#333" stroke-width=".7"/></svg>
<div class="a" style="left:3.5px;top:511px;width:816px;height:10.5px;background:#f6f5f8"></div>
<div class="t" style="left:9.0px;top:514.02px;font-size:5.50px;color:#555;">Sayfa 1/4</div>
<div class="t" style="left:43.0px;top:514.02px;font-size:5.50px;color:#555;">984 sözcük</div>
<svg style="left:81px;top:513px" width="8" height="8" viewBox="0 0 8 8"><rect x="0.5" y="0.5" width="7" height="6" fill="none" stroke="#666" stroke-width=".7"/><path d="M4 0.5 V6.5 M2 7.5 H6" stroke="#666" stroke-width=".7"/></svg>
<div class="t" style="left:99.0px;top:514.02px;font-size:5.50px;color:#555;">Metin Tahminleri: Açık</div>
<svg style="left:164px;top:512.5px" width="8" height="9" viewBox="0 0 8 9"><path d="M1 1 H7 M4 1 V5 L2 8.5 M4 5 L6 8.5" fill="none" stroke="#666" stroke-width=".8"/><circle cx="6.2" cy="6.5" r="1.5" fill="#666"/></svg>
<div class="t" style="left:173.0px;top:514.02px;font-size:5.50px;color:#555;">Erişilebilirlik: Her şey hazır</div>
<svg style="left:632px;top:512.5px" width="9" height="8" viewBox="0 0 9 8"><path d="M0.5 2.5 V0.5 H2.5 M6.5 0.5 H8.5 V2.5 M8.5 5.5 V7.5 H6.5 M2.5 7.5 H0.5 V5.5" fill="none" stroke="#555" stroke-width=".8"/><rect x="2.5" y="2" width="4" height="4" fill="none" stroke="#555" stroke-width=".7"/></svg>
<div class="t" style="left:642.0px;top:514.02px;font-size:5.50px;color:#555;">Odak</div>
<svg style="left:668px;top:513px" width="8" height="7" viewBox="0 0 8 7"><rect x="0.5" y="0.5" width="7" height="6" fill="none" stroke="#777" stroke-width=".7"/><path d="M4 0.5 V6.5 M1.5 2 H3 M1.5 3.5 H3 M5 2 H6.5 M5 3.5 H6.5" stroke="#777" stroke-width=".6"/></svg>
<div class="a" style="left:683px;top:511.5px;width:21px;height:10px;background:#e2e1e5"></div>
<svg style="left:690px;top:512.5px" width="7" height="8" viewBox="0 0 7 8"><rect x="0.5" y="0.5" width="6" height="7" fill="none" stroke="#555" stroke-width=".7"/><path d="M1.8 2.3 H5.2 M1.8 4 H5.2 M1.8 5.7 H5.2" stroke="#555" stroke-width=".6"/></svg>
<svg style="left:711px;top:512.5px" width="9" height="8" viewBox="0 0 9 8"><rect x="0.5" y="0.5" width="7" height="6" fill="none" stroke="#777" stroke-width=".7"/><circle cx="6.5" cy="5.5" r="2" fill="#555"/></svg>
<div class="a" style="left:728px;top:516px;width:4px;height:0.8px;background:#666"></div>
<div class="a" style="left:735px;top:516px;width:54px;height:0.8px;background:#aaa"></div>
<div class="a" style="left:761px;top:513px;width:2px;height:6px;background:#444"></div>
<div class="a" style="left:791px;top:516px;width:4px;height:0.8px;background:#666"></div>
<div class="a" style="left:792.6px;top:514.4px;width:0.8px;height:4px;background:#666"></div>
<div class="t" style="left:802.0px;top:514.02px;font-size:5.50px;color:#555;">%100</div>
<!-- ===== ZOOM TOP BAR ===== -->
<div class="t" style="left:9.0px;top:3.93px;font-size:8.60px;color:#f2f2f2;font-weight:bold;letter-spacing:-0.3px">zoom</div>
<div class="t" style="left:9.0px;top:13.50px;font-size:10.00px;color:#f2f2f2;font-weight:bold">Workplace</div>
<svg style="left:87px;top:6px" width="11" height="11" viewBox="0 0 11 11"><circle cx="5.5" cy="5.5" r="4.7" fill="none" stroke="#d8d8d8" stroke-width="1"/><circle cx="5.5" cy="3.2" r=".8" fill="#e0e0e0"/><path d="M5.5 4.6 V8.3 M4.3 8.3 H6.7 M4.5 4.8 H5.5" stroke="#e0e0e0" stroke-width="1.2"/></svg>
<svg style="left:115px;top:9px" width="7" height="4" viewBox="0 0 7 4"><path d="M0.7 0.7 L3.5 3.2 L6.3 0.7" fill="none" stroke="#e0e0e0" stroke-width="1.3"/></svg>
<svg style="left:146px;top:7px" width="13" height="12" viewBox="0 0 13 12"><circle cx="3" cy="3" r="1.8" fill="#f0f0f0"/><circle cx="10" cy="3" r="1.8" fill="#f0f0f0"/><circle cx="6.5" cy="4.3" r="2" fill="#f0f0f0"/><ellipse cx="2.5" cy="7" rx="2.5" ry="1.6" fill="#f0f0f0"/><ellipse cx="10.5" cy="7" rx="2.5" ry="1.6" fill="#f0f0f0"/><ellipse cx="6.5" cy="10" rx="3.8" ry="2" fill="#f0f0f0"/></svg>
<div class="t" style="left:165.0px;top:9.46px;font-size:8.30px;color:#dcdcdc;">Toplantı</div>
<div class="a" style="left:323.5px;top:7.5px;width:11.5px;height:12px;border-radius:3px;background:linear-gradient(#e6701e,#d95d10)"></div>
<div class="t" style="left:324.5px;top:10.77px;font-size:6.50px;color:#ffe2c8;font-weight:bold">O</div>
<div class="t" style="left:329.5px;top:12.03px;font-size:5.50px;color:#ffe2c8;font-weight:bold">ş</div>
<div class="t" style="left:341.0px;top:9.95px;font-size:7.90px;color:#e2e2e2;">osman şalcı adlı kişinin ekranı</div>
<svg style="left:464.5px;top:7px" width="13" height="13" viewBox="0 0 13 13"><circle cx="6.5" cy="6.5" r="5.6" fill="none" stroke="#e0e0e0" stroke-width="1"/><circle cx="3.9" cy="6.5" r=".9" fill="#e0e0e0"/><circle cx="6.5" cy="6.5" r=".9" fill="#e0e0e0"/><circle cx="9.1" cy="6.5" r=".9" fill="#e0e0e0"/></svg>
<svg style="left:779px;top:6px" width="11" height="12" viewBox="0 0 11 12"><path d="M5.5 0.5 L10.2 2.2 V5.8 C10.2 8.8 8 10.6 5.5 11.5 C3 10.6 0.8 8.8 0.8 5.8 V2.2 Z" fill="#27c46a"/><path d="M3.2 5.8 L4.9 7.4 L7.9 4.3" fill="none" stroke="#12361f" stroke-width="1.1"/></svg>
<div class="a" style="left:807.0px;top:9.0px;width:6.0px;height:6.0px;background:#e0243c;border-radius:50%;"></div>
<div class="t" style="left:816.0px;top:8.38px;font-size:8.50px;color:#e8e8e8;">REC</div>
<div class="a" style="left:850.5px;top:2.0px;width:20.0px;height:20.0px;background:#1f2024;border-radius:50%;"></div>
<svg style="left:856px;top:7px" width="10" height="10" viewBox="0 0 10 10"><rect x="0" y="0" width="5" height="10" fill="#f0f0f0"/><rect x="6" y="0" width="4" height="2.6" fill="#f0f0f0"/><rect x="6" y="3.7" width="4" height="2.6" fill="#f0f0f0"/><rect x="6" y="7.4" width="4" height="2.6" fill="#f0f0f0"/></svg>
<div class="a" style="left:877.0px;top:2.0px;width:53.0px;height:21.0px;background:#ffffff;border-radius:4px"></div>
<div class="t" style="left:903.5px;top:8.85px;font-size:7.90px;color:#2b2b2b;transform:translateX(-50%);">Giriş yapın</div>
<div class="a" style="left:955.0px;top:12.0px;width:8.0px;height:1.0px;background:#d0d0d0;"></div>
<svg style="left:985px;top:7px" width="10" height="10" viewBox="0 0 10 10"><rect x="0.6" y="2.6" width="6.8" height="6.8" rx="1.2" fill="none" stroke="#d0d0d0" stroke-width="1"/><path d="M2.6 2.6 V1.8 C2.6 1.1 3 0.6 3.8 0.6 H8.2 C8.9 0.6 9.4 1.1 9.4 1.8 V6.2 C9.4 7 8.9 7.4 8.2 7.4 H7.4" fill="none" stroke="#d0d0d0" stroke-width="1"/></svg>
<svg style="left:1014px;top:7px" width="10" height="10" viewBox="0 0 10 10"><path d="M0.8 0.8 L9.2 9.2 M9.2 0.8 L0.8 9.2" stroke="#d8d8d8" stroke-width="1"/></svg>
<!-- thumbs -->
<div class="th" style="top:60px;border-radius:4px 4px 0 0"><div class="a" style="left:0.0px;top:0.0px;width:108.0px;height:61.0px;background:linear-gradient(90deg,#e6d2d4 0%,#ecdcdd 25%,#f4eeeb 40%,#f2ece8 52%,#e2d9d1 56%,#e4dbd3 60%,#eee6e2 64%,#efe8e4 100%);"></div>
<div class="a" style="left:103.0px;top:0.0px;width:5.0px;height:20.0px;background:linear-gradient(90deg,rgba(140,120,115,0),#6e5e5c);"></div>
<div class="a" style="left:67.0px;top:28.0px;width:4.0px;height:12.0px;background:#d88aa8;border-radius:2px;filter:blur(1px);"></div>
<div class="a" style="left:62.0px;top:38.0px;width:20.0px;height:10.0px;background:#6aa050;border-radius:50%;opacity:.85;filter:blur(1px);"></div>
<div class="a" style="left:-6.0px;top:36.0px;width:40.0px;height:40.0px;background:#686270;border-radius:50%;filter:blur(1px);"></div>
<div class="a" style="left:9.0px;top:39.0px;width:56.0px;height:42.0px;background:#4a4448;border-radius:50%;filter:blur(1px);"></div>
<div class="a" style="left:30.0px;top:18.0px;width:22.0px;height:30.0px;background:#b4887a;border-radius:50%;filter:blur(1px);"></div>
<div class="a" style="left:27.0px;top:11.0px;width:28.0px;height:11.0px;background:#2a2424;border-radius:50%;filter:blur(1px);"></div>
<div class="a" style="left:26.0px;top:14.0px;width:6.0px;height:14.0px;background:#2a2424;border-radius:50%;filter:blur(1px);"></div>
<div class="a" style="left:50.0px;top:14.0px;width:6.0px;height:12.0px;background:#2a2424;border-radius:50%;filter:blur(1px);"></div>
<div class="a" style="left:32.0px;top:28.0px;width:18.0px;height:1.5px;background:rgba(60,40,40,.45);filter:blur(1px);"></div>
<div class="a" style="left:34.0px;top:28.0px;width:5.0px;height:2.5px;background:rgba(40,25,25,.75);border-radius:50%;filter:blur(1px);"></div>
<div class="a" style="left:43.0px;top:28.0px;width:5.0px;height:2.5px;background:rgba(40,25,25,.75);border-radius:50%;filter:blur(1px);"></div>
<div class="a" style="left:38.0px;top:39.0px;width:6.0px;height:1.5px;background:rgba(90,50,50,.6);filter:blur(1px);"></div>
</div>
<div class="th" style="top:121px"><div class="a" style="left:0.0px;top:0.0px;width:108.0px;height:61.0px;background:#e4ded3;"></div>
<div class="a" style="left:0.0px;top:0.0px;width:108.0px;height:2.0px;background:#4a3a38;"></div>
<div class="a" style="left:16.5px;top:0.0px;width:52.0px;height:19.0px;background:linear-gradient(90deg,#1e1a1a 0%,#6a2a2a 20%,#2a2222 40%,#1a1616 60%,#6a2626 100%);filter:blur(1px);"></div>
<div class="a" style="left:30.0px;top:3.0px;width:22.0px;height:12.0px;background:rgba(200,190,190,.35);filter:blur(1px);"></div>
<div class="a" style="left:21.0px;top:16.0px;width:15.0px;height:13.0px;background:#1d3550;filter:blur(1px);"></div>
<div class="a" style="left:25.0px;top:18.0px;width:7.0px;height:8.0px;background:#e8e8f0;border-radius:50%;opacity:.8;filter:blur(1px);"></div>
<div class="a" style="left:66.0px;top:21.0px;width:10.0px;height:9.0px;background:#2a2e38;filter:blur(1px);"></div>
<div class="a" style="left:0.0px;top:30.0px;width:86.0px;height:2.0px;background:#3a2c28;"></div>
<div class="a" style="left:0.0px;top:32.0px;width:86.0px;height:29.0px;background:linear-gradient(90deg,#5a2a24,#6a3028 40%,#4a2420 100%);"></div>
<div class="a" style="left:21.0px;top:34.0px;width:25.0px;height:27.0px;background:#232830;filter:blur(1px);"></div>
<div class="a" style="left:36.0px;top:47.0px;width:46.0px;height:28.0px;background:#5a3a3a;border-radius:50%;filter:blur(1px);"></div>
<div class="a" style="left:48.0px;top:24.0px;width:20.0px;height:30.0px;background:#c8986a;border-radius:50%;filter:blur(1px);"></div>
<div class="a" style="left:51.0px;top:28.0px;width:13.0px;height:17.0px;background:#e2b8a0;border-radius:50%;filter:blur(1px);"></div>
<div class="a" style="left:52.5px;top:34.0px;width:3.5px;height:1.8px;background:rgba(60,35,30,.6);border-radius:50%;filter:blur(1px);"></div>
<div class="a" style="left:58.0px;top:34.0px;width:3.5px;height:1.8px;background:rgba(60,35,30,.6);border-radius:50%;filter:blur(1px);"></div>
<div class="a" style="left:84.0px;top:3.0px;width:8.0px;height:57.0px;background:linear-gradient(90deg,#ffffff,#dde4ec);filter:blur(1px);"></div>
<div class="a" style="left:86.0px;top:18.0px;width:5.0px;height:22.0px;background:#5d8ec4;border-radius:50%;opacity:.75;filter:blur(1px);"></div>
<div class="a" style="left:92.0px;top:10.0px;width:16.0px;height:51.0px;background:#2c2326;filter:blur(1px);"></div>
<div class="a" style="left:92.0px;top:32.0px;width:8.0px;height:29.0px;background:#4a2a40;filter:blur(1px);"></div>
</div>
<div class="th" style="top:182px"><div class="a" style="left:0.0px;top:0.0px;width:108.0px;height:61.0px;background:linear-gradient(180deg,#ebe6dc 0%,#dcd4c6 14%,#d6cdbd 100%);"></div>
<div class="a" style="left:0.0px;top:0.0px;width:108.0px;height:1.5px;background:#3a2a30;"></div>
<div class="a" style="left:103.0px;top:2.0px;width:5.0px;height:59.0px;background:#c9c0b0;filter:blur(1px);"></div>
<div class="a" style="left:72.0px;top:36.0px;width:26.0px;height:28.0px;background:#1f3a58;border-radius:6px 6px 0 0;filter:blur(1px);"></div>
<div class="a" style="left:36.0px;top:0.0px;width:38.0px;height:54.0px;background:#1e5a7a;border-radius:50%;filter:blur(1px);"></div>
<div class="a" style="left:42.0px;top:10.0px;width:26.0px;height:36.0px;background:#d0a898;border-radius:50%;filter:blur(1px);"></div>
<div class="a" style="left:43.0px;top:22.0px;width:24.0px;height:1.5px;background:rgba(50,40,40,.45);filter:blur(1px);"></div>
<div class="a" style="left:47.0px;top:21.5px;width:6.0px;height:3.0px;background:rgba(40,25,25,.75);border-radius:50%;filter:blur(1px);"></div>
<div class="a" style="left:57.0px;top:21.5px;width:6.0px;height:3.0px;background:rgba(40,25,25,.75);border-radius:50%;filter:blur(1px);"></div>
<div class="a" style="left:51.0px;top:35.0px;width:8.0px;height:1.5px;background:rgba(110,60,60,.6);filter:blur(1px);"></div>
<div class="a" style="left:12.0px;top:44.0px;width:84.0px;height:40.0px;background:#1a2638;border-radius:50%;filter:blur(1px);"></div>
<div class="a" style="left:52.0px;top:42.0px;width:22.0px;height:12.0px;background:#d6b0a0;border-radius:50%;filter:blur(1px);"></div>
</div>
<div class="th" style="top:242px;left:878px;width:110px;height:63px;border:2px solid #3ddc84"><div class="a" style="left:0.0px;top:0.0px;width:106.0px;height:59.0px;background:#ebe5dc;"></div>
<div class="a" style="left:28.0px;top:3.0px;width:44.0px;height:56.0px;background:repeating-linear-gradient(180deg,#70757c 0px,#70757c 5px,#a9acb0 5px,#a9acb0 11px);filter:blur(1px);"></div>
<div class="a" style="left:28.0px;top:41.0px;width:44.0px;height:6.0px;background:#d6c13a;filter:blur(1px);"></div>
<div class="a" style="left:71.0px;top:2.0px;width:9.0px;height:57.0px;background:#f4f0ea;filter:blur(1px);"></div>
<div class="a" style="left:79.0px;top:3.0px;width:18.0px;height:56.0px;background:repeating-linear-gradient(180deg,#70757c 0px,#70757c 5px,#a9acb0 5px,#a9acb0 11px);filter:blur(1px);"></div>
<div class="a" style="left:79.0px;top:41.0px;width:18.0px;height:6.0px;background:#d6c13a;filter:blur(1px);"></div>
<div class="a" style="left:97.0px;top:0.0px;width:9.0px;height:59.0px;background:#efe9e0;filter:blur(1px);"></div>
<div class="a" style="left:50.0px;top:50.0px;width:48.0px;height:20.0px;background:#1e1e22;border-radius:50%;filter:blur(1px);"></div>
<div class="a" style="left:27.0px;top:20.0px;width:33.0px;height:44.0px;background:#b88878;border-radius:50%;filter:blur(1px);"></div>
<div class="a" style="left:44.0px;top:24.0px;width:16.0px;height:36.0px;background:rgba(120,80,70,.35);border-radius:50%;filter:blur(1px);"></div>
<div class="a" style="left:22.0px;top:9.0px;width:38.0px;height:17.0px;background:#4e4844;border-radius:50%;filter:blur(1px);"></div>
<div class="a" style="left:18.0px;top:12.0px;width:10.0px;height:8.0px;background:#5a5450;border-radius:50%;filter:blur(1px);"></div>
<div class="a" style="left:21.0px;top:15.0px;width:8.0px;height:20.0px;background:#4e4844;border-radius:50%;filter:blur(1px);"></div>
<div class="a" style="left:33.0px;top:33.0px;width:7.0px;height:3.0px;background:rgba(50,30,25,.7);border-radius:50%;filter:blur(1px);"></div>
<div class="a" style="left:45.0px;top:33.0px;width:7.0px;height:3.0px;background:rgba(50,30,25,.7);border-radius:50%;filter:blur(1px);"></div>
<div class="a" style="left:36.0px;top:50.0px;width:11.0px;height:2.0px;background:rgba(90,50,40,.5);filter:blur(1px);"></div>
</div>
<div class="th" style="top:305px"><div class="a" style="left:0.0px;top:0.0px;width:108.0px;height:61.0px;background:#242529;"></div>
<div class="a" style="left:31.0px;top:0.0px;width:46.0px;height:61.0px;background:#ded8ce;"></div>
<div class="a" style="left:46.0px;top:17.0px;width:10.0px;height:7.0px;background:#8a96a4;filter:blur(1px);"></div>
<div class="a" style="left:64.0px;top:19.0px;width:7.0px;height:22.0px;background:#b0c8e2;opacity:.8;filter:blur(1px);"></div>
<div class="a" style="left:72.0px;top:24.0px;width:4.0px;height:24.0px;background:#c4c8d0;filter:blur(1px);"></div>
<div class="a" style="left:32.0px;top:37.0px;width:46.0px;height:46.0px;background:#171a21;border-radius:50%;filter:blur(1px);"></div>
<div class="a" style="left:52.0px;top:22.0px;width:12.0px;height:19.0px;background:#c4a090;border-radius:50%;filter:blur(1px);"></div>
<div class="a" style="left:53.5px;top:29.0px;width:3.0px;height:1.6px;background:rgba(40,25,25,.6);border-radius:50%;filter:blur(1px);"></div>
<div class="a" style="left:58.5px;top:29.0px;width:3.0px;height:1.6px;background:rgba(40,25,25,.6);border-radius:50%;filter:blur(1px);"></div>
<div class="a" style="left:50.0px;top:20.0px;width:15.0px;height:7.0px;background:#2a2222;border-radius:50%;filter:blur(1px);"></div>
<div class="a" style="left:70.0px;top:50.0px;width:6.0px;height:11.0px;background:#c8a898;filter:blur(1px);"></div>
</div>
<div class="th" style="top:365px"><div class="a" style="left:0.0px;top:0.0px;width:108.0px;height:61.0px;background:linear-gradient(90deg,#dcdcd8 0%,#e6e6e2 12%,#dedddA 40%,#d8d8d4 70%,#f0f0ee 78%,#f6f6f4 100%);"></div>
<div class="a" style="left:12.0px;top:0.0px;width:3.0px;height:61.0px;background:#c4c4be;filter:blur(1px);"></div>
<div class="a" style="left:0.0px;top:42.0px;width:13.0px;height:19.0px;background:#b4b4ac;filter:blur(1px);"></div>
<div class="a" style="left:79.0px;top:48.0px;width:29.0px;height:6.0px;background:#c8c8c4;filter:blur(1px);"></div>
<div class="a" style="left:14.0px;top:31.0px;width:24.0px;height:40.0px;background:#26262c;border-radius:50%;filter:blur(1px);"></div>
<div class="a" style="left:33.0px;top:0.0px;width:38.0px;height:74.0px;background:#3a2a22;border-radius:50%;filter:blur(1px);"></div>
<div class="a" style="left:40.0px;top:9.0px;width:23.0px;height:35.0px;background:#cca494;border-radius:50%;filter:blur(1px);"></div>
<div class="a" style="left:43.0px;top:24.0px;width:6.0px;height:2.2px;background:rgba(50,30,25,.6);border-radius:50%;filter:blur(1px);"></div>
<div class="a" style="left:53.0px;top:24.0px;width:6.0px;height:2.2px;background:rgba(50,30,25,.6);border-radius:50%;filter:blur(1px);"></div>
<div class="a" style="left:48.0px;top:36.0px;width:7.0px;height:1.5px;background:rgba(140,70,70,.6);filter:blur(1px);"></div>
<div class="a" style="left:22.0px;top:46.0px;width:64.0px;height:30.0px;background:#5a4a3a;border-radius:50%;filter:blur(1px);"></div>
</div>
<div class="th" style="top:426px;height:62px;border-radius:0 0 4px 4px"><div class="a" style="left:0.0px;top:0.0px;width:108.0px;height:62.0px;background:linear-gradient(90deg,#aaa69e 0%,#b8b2aa 30%,#c2bcb2 55%,#d4d0c6 78%,#dcd8ce 100%);"></div>
<div class="a" style="left:28.0px;top:1.0px;width:27.0px;height:22.0px;background:#e6eae6;filter:blur(1px);"></div>
<div class="a" style="left:24.0px;top:22.0px;width:37.0px;height:7.0px;background:#c8c6be;filter:blur(1px);"></div>
<div class="a" style="left:0.0px;top:0.0px;width:108.0px;height:1.0px;background:#d8d8d8;"></div>
<div class="a" style="left:84.0px;top:20.0px;width:22.0px;height:30.0px;background:#d0ccc0;filter:blur(1px);"></div>
<div class="a" style="left:35.0px;top:31.0px;width:20.0px;height:18.0px;background:#2a3040;filter:blur(1px);"></div>
<div class="a" style="left:33.0px;top:34.0px;width:66.0px;height:46.0px;background:#7a8aa2;border-radius:50%;filter:blur(1px);"></div>
<div class="a" style="left:56.0px;top:10.0px;width:25.0px;height:31.0px;background:#b48474;border-radius:50%;filter:blur(1px);"></div>
<div class="a" style="left:59.0px;top:22.0px;width:6.0px;height:2.5px;background:rgba(40,25,20,.7);border-radius:50%;filter:blur(1px);"></div>
<div class="a" style="left:70.0px;top:22.0px;width:6.0px;height:2.5px;background:rgba(40,25,20,.7);border-radius:50%;filter:blur(1px);"></div>
<div class="a" style="left:55.0px;top:6.0px;width:27.0px;height:11.0px;background:#2c2824;border-radius:50%;filter:blur(1px);"></div>
<div class="a" style="left:72.0px;top:31.0px;width:24.0px;height:16.0px;background:#b89080;border-radius:50%;filter:blur(1px);"></div>
<div class="a" style="left:74.0px;top:34.0px;width:8.0px;height:3.0px;background:#3a5ab0;filter:blur(1px);"></div>
</div>
<div class="a" style="left:881px;top:107px;width:106px;height:13px;background:rgba(34,34,36,.68);border-radius:3px"></div>
<svg style="left:883.5px;top:109.0px" width="8" height="9" viewBox="0 0 8 9"><rect x="2.6" y="0.6" width="2.8" height="5" rx="1.4" fill="none" stroke="#e05555" stroke-width=".9"/><path d="M1.2 4 C1.2 6.5 2.5 7.2 4 7.2 C5.5 7.2 6.8 6.5 6.8 4 M4 7.2 V8.6" fill="none" stroke="#e05555" stroke-width=".8"/><path d="M0.8 8.4 L7.2 0.6" stroke="#e03a3a" stroke-width="1.1"/></svg>
<svg style="left:897px;top:109px" width="7" height="9" viewBox="0 0 7 9"><path d="M1.5 0.5 H5.5 L5 3.5 L6.5 5.2 H0.5 L2 3.5 Z" fill="#e8e8e8"/><path d="M3.5 5 V8.8" stroke="#e8e8e8" stroke-width=".9"/></svg>
<div class="t" style="left:908.4px;top:109.93px;font-size:8.60px;color:#e4e4e4;transform:scaleX(0.935);transform-origin:0 0">Öğr. Gör. Elif YATGIN</div>
<div class="a" style="left:881px;top:168px;width:80px;height:13px;background:rgba(34,34,36,.68);border-radius:3px"></div>
<div class="t" style="left:883.2px;top:170.93px;font-size:8.60px;color:#e4e4e4;transform:scaleX(0.932);transform-origin:0 0">Özge ÖZGÜR-BARÜ</div>
<div class="a" style="left:881px;top:229px;width:106px;height:13px;background:rgba(34,34,36,.68);border-radius:3px"></div>
<svg style="left:883.5px;top:231.0px" width="8" height="9" viewBox="0 0 8 9"><rect x="2.6" y="0.6" width="2.8" height="5" rx="1.4" fill="none" stroke="#e05555" stroke-width=".9"/><path d="M1.2 4 C1.2 6.5 2.5 7.2 4 7.2 C5.5 7.2 6.8 6.5 6.8 4 M4 7.2 V8.6" fill="none" stroke="#e05555" stroke-width=".8"/><path d="M0.8 8.4 L7.2 0.6" stroke="#e03a3a" stroke-width="1.1"/></svg>
<div class="t" style="left:895.9px;top:231.93px;font-size:8.60px;color:#e4e4e4;transform:scaleX(0.929);transform-origin:0 0">Yasemin Şahin Yıldız-B...</div>
<div class="a" style="left:881px;top:290px;width:49px;height:13px;background:rgba(34,34,36,.68);border-radius:3px"></div>
<div class="t" style="left:883.4px;top:292.93px;font-size:8.60px;color:#e4e4e4;transform:scaleX(0.954);transform-origin:0 0">osman şalcı</div>
<div class="a" style="left:881px;top:351px;width:54px;height:13px;background:rgba(34,34,36,.68);border-radius:3px"></div>
<div class="t" style="left:883.4px;top:353.93px;font-size:8.60px;color:#e4e4e4;transform:scaleX(0.950);transform-origin:0 0">Gülşah Engin</div>
<div class="a" style="left:881px;top:412px;width:62px;height:13px;background:rgba(34,34,36,.68);border-radius:3px"></div>
<svg style="left:883.5px;top:414.0px" width="8" height="9" viewBox="0 0 8 9"><rect x="2.6" y="0.6" width="2.8" height="5" rx="1.4" fill="none" stroke="#e05555" stroke-width=".9"/><path d="M1.2 4 C1.2 6.5 2.5 7.2 4 7.2 C5.5 7.2 6.8 6.5 6.8 4 M4 7.2 V8.6" fill="none" stroke="#e05555" stroke-width=".8"/><path d="M0.8 8.4 L7.2 0.6" stroke="#e03a3a" stroke-width="1.1"/></svg>
<div class="t" style="left:895.9px;top:414.93px;font-size:8.60px;color:#e4e4e4;transform:scaleX(1.000);transform-origin:0 0">Birgül Altuğ</div>
<div class="a" style="left:881px;top:474px;width:106px;height:13px;background:rgba(34,34,36,.68);border-radius:3px"></div>
<svg style="left:883.5px;top:476.0px" width="8" height="9" viewBox="0 0 8 9"><rect x="2.6" y="0.6" width="2.8" height="5" rx="1.4" fill="none" stroke="#e05555" stroke-width=".9"/><path d="M1.2 4 C1.2 6.5 2.5 7.2 4 7.2 C5.5 7.2 6.8 6.5 6.8 4 M4 7.2 V8.6" fill="none" stroke="#e05555" stroke-width=".8"/><path d="M0.8 8.4 L7.2 0.6" stroke="#e03a3a" stroke-width="1.1"/></svg>
<div class="t" style="left:895.9px;top:476.93px;font-size:8.60px;color:#e4e4e4;transform:scaleX(0.954);transform-origin:0 0">Sağlık Hizmetleri Mesl...</div>
<div class="t" style="left:933.0px;top:513.03px;font-size:11.50px;color:#f0f0f0;transform:translateX(-50%);font-weight:bold">Tuncay Çorak</div>
<div class="a" style="left:882px;top:534px;width:67px;height:13px;background:rgba(34,34,36,.68);border-radius:3px"></div>
<svg style="left:884.5px;top:536.0px" width="8" height="9" viewBox="0 0 8 9"><rect x="2.6" y="0.6" width="2.8" height="5" rx="1.4" fill="none" stroke="#e05555" stroke-width=".9"/><path d="M1.2 4 C1.2 6.5 2.5 7.2 4 7.2 C5.5 7.2 6.8 6.5 6.8 4 M4 7.2 V8.6" fill="none" stroke="#e05555" stroke-width=".8"/><path d="M0.8 8.4 L7.2 0.6" stroke="#e03a3a" stroke-width="1.1"/></svg>
<div class="t" style="left:896.0px;top:536.93px;font-size:8.60px;color:#e4e4e4;transform:scaleX(0.960);transform-origin:0 0">Tuncay Çorak</div>
<div class="a" style="left:908.0px;top:549.0px;width:49.0px;height:22.0px;background:#101114;border-radius:3px"></div>
<svg style="left:928px;top:556.5px" width="10" height="6" viewBox="0 0 10 6"><path d="M0.6 0.6 L5 5 L9.4 0.6" fill="none" stroke="#c8c8c8" stroke-width="1"/></svg>
<svg style="left:12px;top:529.5px" width="35" height="35" viewBox="0 0 35 35"><circle cx="17.4" cy="17.2" r="16.4" fill="#222327" stroke="#c9c9c9" stroke-width="1.5"/><g transform="rotate(-45 18.5 16.5)"><rect x="10.6" y="14.2" width="15.8" height="4.8" rx="2.4" fill="#0e2a1a" stroke="#35d488" stroke-width="1.2"/><path d="M22.3 14.4 V18.8" stroke="#35d488" stroke-width="1.1"/></g></svg>
<div class="a" style="left:823.0px;top:290.0px;width:3.0px;height:27.0px;background:#77787b;border-radius:1px"></div>
<div class="a" style="left:0.0px;top:573.0px;width:1024.0px;height:40.0px;background:#000;"></div>
<svg style="left:26px;top:580px" width="17" height="18" viewBox="0 0 17 18"><rect x="5.8" y="1" width="5" height="9" rx="2.5" fill="none" stroke="#f0f0f0" stroke-width="1.1"/><path d="M3.3 7.5 C3.3 11.3 5.5 12.7 8.3 12.7 C11.1 12.7 13.3 11.3 13.3 7.5 M8.3 12.7 V16 M5.8 16.3 H10.8" fill="none" stroke="#f0f0f0" stroke-width="1.1"/><path d="M0.8 17 L14.5 1.8" stroke="#e0245e" stroke-width="1.6"/></svg>
<div class="t" style="left:34.0px;top:601.23px;font-size:7.50px;color:#f2f2f2;transform:translateX(-50%);font-weight:bold">Ses</div>
<svg style="left:52.0px;top:586.5px" width="6" height="4" viewBox="0 0 6 4"><path d="M0.7 3.2 L3 0.9 L5.3 3.2" fill="none" stroke="#f0f0f0" stroke-width="1.3"/></svg>
<svg style="left:88.5px;top:583.5px" width="17" height="10.5" viewBox="0 0 17 10.5"><rect x="0.6" y="0.6" width="10.2" height="9.3" rx="2" fill="none" stroke="#f0f0f0" stroke-width="1.1"/><path d="M11 4 L16.2 1 V9.5 L11 6.5" fill="none" stroke="#f0f0f0" stroke-width="1.1" stroke-linejoin="round"/></svg>
<div class="t" style="left:97.0px;top:601.23px;font-size:7.50px;color:#f2f2f2;transform:translateX(-50%);font-weight:bold">Video</div>
<svg style="left:119.0px;top:586.5px" width="6" height="4" viewBox="0 0 6 4"><path d="M0.7 3.2 L3 0.9 L5.3 3.2" fill="none" stroke="#f0f0f0" stroke-width="1.3"/></svg>
<svg style="left:427.5px;top:582.5px" width="13" height="13" viewBox="0 0 13 13"><circle cx="3.6" cy="3" r="1.8" fill="none" stroke="#f0f0f0" stroke-width="1"/><circle cx="9" cy="5.3" r="1.8" fill="none" stroke="#f0f0f0" stroke-width="1"/><path d="M4.5 7.2 C2.5 6.8 0.6 7.6 0.6 9.5 C0.6 11 1.8 11.8 3.8 11.8" fill="none" stroke="#f0f0f0" stroke-width="1"/><ellipse cx="9" cy="10.2" rx="3.4" ry="2.1" fill="none" stroke="#f0f0f0" stroke-width="1"/></svg>
<div class="t" style="left:446.0px;top:584.08px;font-size:7.60px;color:#d8d8d8;">14</div>
<div class="t" style="left:434.0px;top:601.23px;font-size:7.50px;color:#f2f2f2;transform:translateX(-50%);font-weight:bold">Katılımcılar</div>
<svg style="left:466.5px;top:586.5px" width="6" height="4" viewBox="0 0 6 4"><path d="M0.7 3.2 L3 0.9 L5.3 3.2" fill="none" stroke="#f0f0f0" stroke-width="1.3"/></svg>
<svg style="left:501px;top:582.5px" width="15" height="14" viewBox="0 0 15 14"><path d="M2.5 0.7 H12.5 C13.5 0.7 14.3 1.5 14.3 2.5 V8.5 C14.3 9.5 13.5 10.3 12.5 10.3 H6 L2.5 13.2 V10.3 C1.5 10.3 0.7 9.5 0.7 8.5 V2.5 C0.7 1.5 1.5 0.7 2.5 0.7 Z" fill="none" stroke="#f0f0f0" stroke-width="1.1"/></svg>
<div class="t" style="left:508.0px;top:601.23px;font-size:7.50px;color:#f2f2f2;transform:translateX(-50%);font-weight:bold">Sohbet</div>
<svg style="left:528.0px;top:586.5px" width="6" height="4" viewBox="0 0 6 4"><path d="M0.7 3.2 L3 0.9 L5.3 3.2" fill="none" stroke="#f0f0f0" stroke-width="1.3"/></svg>
<svg style="left:558.5px;top:582.5px" width="16" height="14" viewBox="0 0 16 14"><path d="M8 13 C4 10 0.8 7.5 0.8 4.3 C0.8 2.2 2.4 0.8 4.3 0.8 C5.8 0.8 7.2 1.8 8 3 C8.8 1.8 10.2 0.8 11.7 0.8 C13.6 0.8 15.2 2.2 15.2 4.3 C15.2 7.5 12 10 8 13 Z" fill="none" stroke="#f0f0f0" stroke-width="1.1"/></svg>
<div class="t" style="left:566.5px;top:601.23px;font-size:7.50px;color:#f2f2f2;transform:translateX(-50%);font-weight:bold">Tepki ver</div>
<svg style="left:618.5px;top:582.5px" width="16" height="13" viewBox="0 0 16 13"><rect x="0.7" y="0.7" width="14.6" height="11.6" rx="1.8" fill="none" stroke="#f0f0f0" stroke-width="1.1"/><path d="M8 9.8 V3.5 M5.3 6 L8 3.3 L10.7 6" fill="none" stroke="#f0f0f0" stroke-width="1.1"/></svg>
<div class="t" style="left:626.6px;top:601.23px;font-size:7.50px;color:#f2f2f2;transform:translateX(-50%);font-weight:bold">Paylaş</div>
<svg style="left:648.0px;top:586.5px" width="6" height="4" viewBox="0 0 6 4"><path d="M0.7 3.2 L3 0.9 L5.3 3.2" fill="none" stroke="#f0f0f0" stroke-width="1.3"/></svg>
<svg style="left:680px;top:581px" width="16" height="16" viewBox="0 0 16 16"><circle cx="8" cy="8" r="7.2" fill="none" stroke="#f0f0f0" stroke-width="1.1"/><circle cx="4.7" cy="8" r="1" fill="#f0f0f0"/><circle cx="8" cy="8" r="1" fill="#f0f0f0"/><circle cx="11.3" cy="8" r="1" fill="#f0f0f0"/></svg>
<div class="t" style="left:688.0px;top:601.23px;font-size:7.50px;color:#f2f2f2;transform:translateX(-50%);font-weight:bold">Daha fazla</div>
<svg style="left:995px;top:579px" width="19" height="19" viewBox="0 0 19 19"><path d="M8 1.2 H16.8 V16.2 L13.5 17.5 V3 Z" fill="none" stroke="#d4245a" stroke-width="1.2" stroke-linejoin="round"/><path d="M13.5 3 L8 1.2" stroke="#d4245a" stroke-width="1"/><g fill="none" stroke-linecap="round" stroke-linejoin="round"><path d="M4.3 8 L7.8 8.2 L10 10.8 M5.6 8.2 L5 12.3 L2.6 16.8 M5 12.3 L7.8 14 L8.6 16.8 M4.3 8 L2.2 11.2" stroke="#f0f0f0" stroke-width="3.2"/><path d="M4.3 8 L7.8 8.2 L10 10.8 M5.6 8.2 L5 12.3 L2.6 16.8 M5 12.3 L7.8 14 L8.6 16.8 M4.3 8 L2.2 11.2" stroke="#000" stroke-width="1.3"/></g><circle cx="7.2" cy="4.7" r="2" fill="#000" stroke="#f0f0f0" stroke-width="1"/></svg>
<div class="t" style="left:1004.5px;top:601.23px;font-size:7.50px;color:#f2f2f2;transform:translateX(-50%);font-weight:bold">Ayrıl</div>
</body></html>
